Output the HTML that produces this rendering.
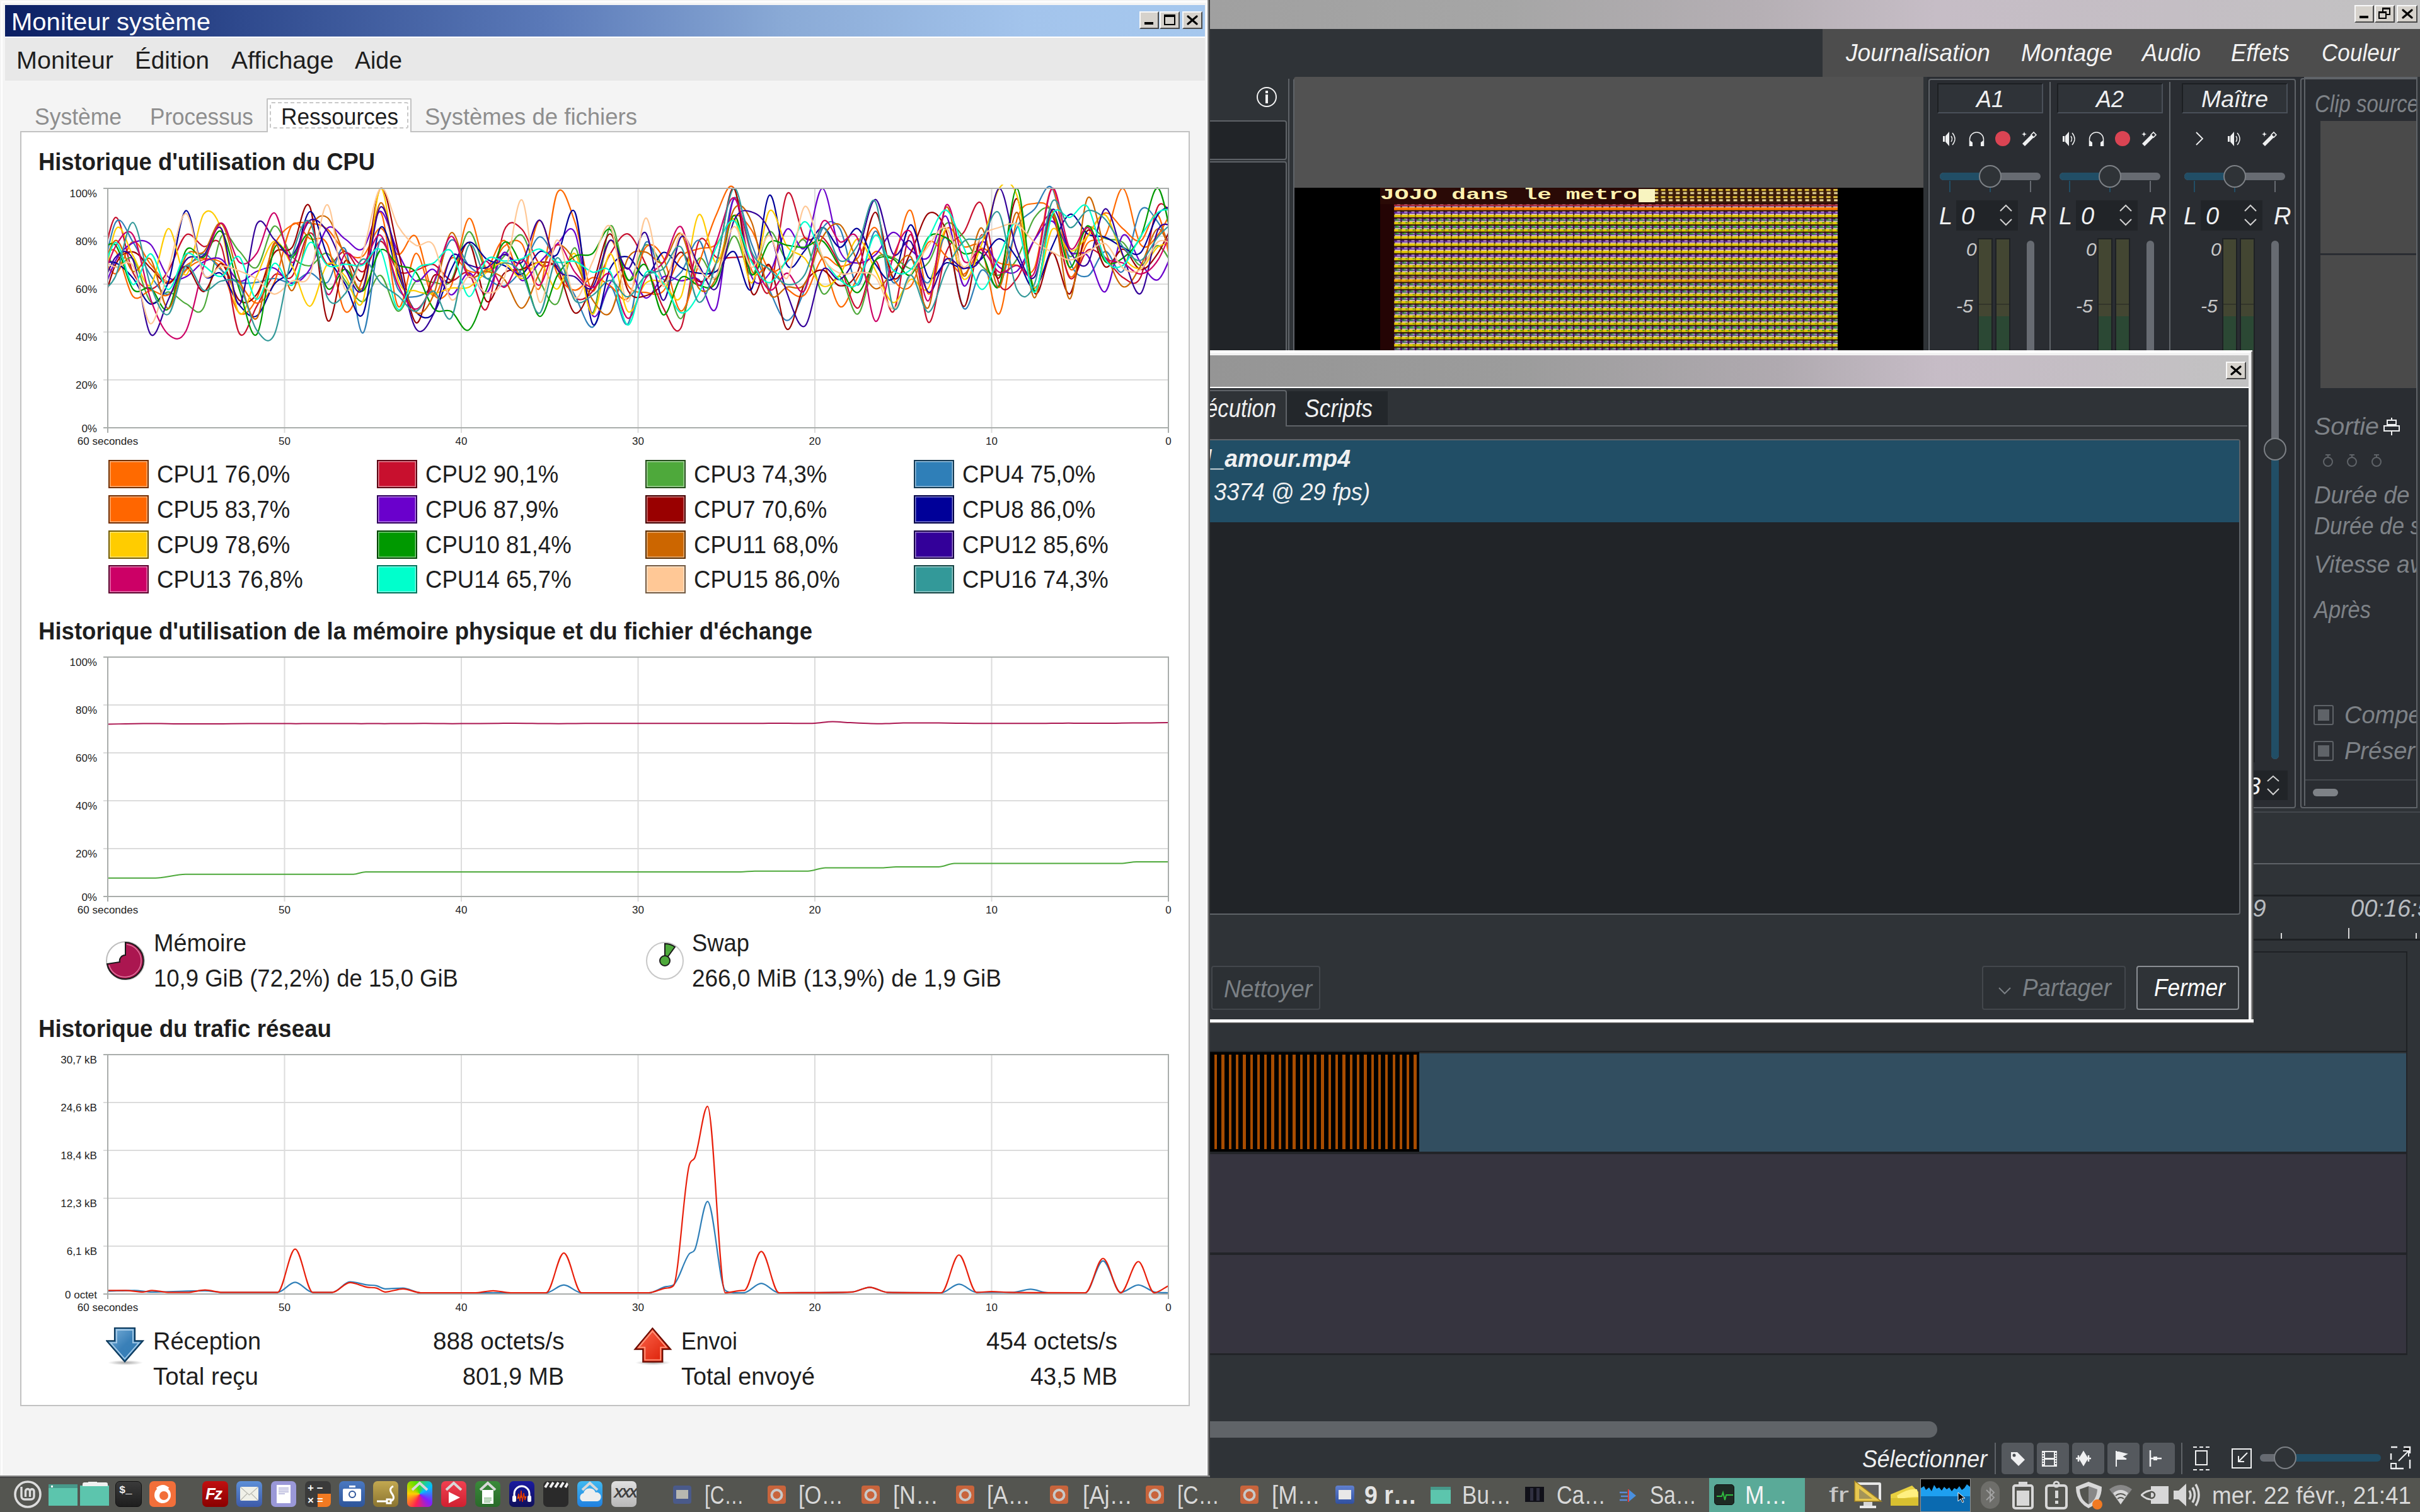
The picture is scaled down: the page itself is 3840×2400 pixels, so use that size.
<!DOCTYPE html><html><head><meta charset="utf-8"><style>
html,body{margin:0;padding:0;width:3840px;height:2400px;overflow:hidden;background:#2f3337}
body{position:relative;font-family:'Liberation Sans', sans-serif}
</style></head><body><div style="position:absolute;left:1920px;top:0px;width:1920px;height:2346px;background:#2f3337;"></div><div style="position:absolute;left:1920px;top:0px;width:1920px;height:46px;background:linear-gradient(90deg,#a0a0a0 0%,#a6a6a6 25%,#b5afb4 45%,#c6bdc6 60%,#c4bec4 80%,#c2c2c2 100%);"></div><div style="position:absolute;left:3736px;top:8px;width:31px;height:28px;background:#d6d2cc;border-top:2px solid #f8f8f8;border-left:2px solid #f8f8f8;border-right:2px solid #4a4a4a;border-bottom:2px solid #4a4a4a;box-sizing:border-box"></div><div style="position:absolute;left:3743.5px;top:25px;width:14px;height:4px;background:#000;"></div><div style="position:absolute;left:3768px;top:8px;width:32px;height:28px;background:#d6d2cc;border-top:2px solid #f8f8f8;border-left:2px solid #f8f8f8;border-right:2px solid #4a4a4a;border-bottom:2px solid #4a4a4a;box-sizing:border-box"></div><div style="position:absolute;left:3780.0px;top:12.0px;width:13px;height:12px;border:2px solid #000;border-top-width:3px;box-sizing:border-box"></div><div style="position:absolute;left:3774.0px;top:18.0px;width:13px;height:12px;border:2px solid #000;border-top-width:3px;box-sizing:border-box;background:#d6d2cc"></div><div style="position:absolute;left:3803px;top:8px;width:33px;height:28px;background:#d6d2cc;border-top:2px solid #f8f8f8;border-left:2px solid #f8f8f8;border-right:2px solid #4a4a4a;border-bottom:2px solid #4a4a4a;box-sizing:border-box"></div><svg style="position:absolute;left:3810.5px;top:14.0px" width="18" height="16"><path d="M2,2L16,14M16,2L2,14" stroke="#000" stroke-width="3.2" stroke-linecap="round"/></svg><div style="position:absolute;left:2892px;top:46px;width:948px;height:76px;background:#4d4d4d;"></div><div style="position:absolute;left:2929.0px;top:64.8px;font-size:38px;line-height:38px;font-weight:400;font-style:italic;color:#f2f2f2;white-space:pre;transform:scaleX(0.9766);transform-origin:0 0;">Journalisation</div><div style="position:absolute;left:3207.0px;top:64.8px;font-size:38px;line-height:38px;font-weight:400;font-style:italic;color:#f2f2f2;white-space:pre;transform:scaleX(0.9805);transform-origin:0 0;">Montage</div><div style="position:absolute;left:3399.0px;top:64.8px;font-size:38px;line-height:38px;font-weight:400;font-style:italic;color:#f2f2f2;white-space:pre;transform:scaleX(0.9568);transform-origin:0 0;">Audio</div><div style="position:absolute;left:3540.0px;top:64.8px;font-size:38px;line-height:38px;font-weight:400;font-style:italic;color:#f2f2f2;white-space:pre;transform:scaleX(0.9572);transform-origin:0 0;">Effets</div><div style="position:absolute;left:3684.0px;top:64.8px;font-size:38px;line-height:38px;font-weight:400;font-style:italic;color:#f2f2f2;white-space:pre;transform:scaleX(0.9243);transform-origin:0 0;">Couleur</div><div style="position:absolute;left:1994px;top:138px;width:32px;height:32px;border:2.5px solid #f4f4f4;border-radius:50%;box-sizing:border-box"></div><div style="position:absolute;left:2008px;top:144px;width:4px;height:4px;background:#f4f4f4;"></div><div style="position:absolute;left:2008px;top:150px;width:4px;height:14px;background:#f4f4f4;"></div><div style="position:absolute;left:1900px;top:191px;width:142px;height:63px;background:#212428;border:2px solid #5f6368;border-radius:4px;box-sizing:border-box"></div><div style="position:absolute;left:1900px;top:256px;width:142px;height:320px;background:#212428;border:2px solid #5f6368;border-radius:4px;box-sizing:border-box"></div><div style="position:absolute;left:2044px;top:125px;width:2px;height:431px;background:#5f6368;"></div><div style="position:absolute;left:2053px;top:122px;width:999px;height:176px;background:#525252;border-top-left-radius:4px"></div><div style="position:absolute;left:2052px;top:126px;width:2px;height:430px;background:#5f6368;"></div><div style="position:absolute;left:2054px;top:298px;width:998px;height:258px;background:#000000;"></div><svg style="position:absolute;left:2190px;top:298px" width="726" height="258">
<defs>
<pattern id="nz" x="0" y="3" width="11.4" height="11.4" patternUnits="userSpaceOnUse">
<rect width="11.4" height="11.4" fill="#3a1a14"/>
<rect x="0" y="5.5" width="11.4" height="4" fill="#e2c808"/>
<rect x="0.5" y="4" width="9" height="1.6" fill="#f2d4ee"/>
<rect x="0" y="1.2" width="11.4" height="2.2" fill="#6028b8"/>
<rect x="4" y="0.6" width="5" height="1.6" fill="#e0b8f0"/>
<rect x="9.6" y="0" width="1.4" height="11.4" fill="#200808" opacity=".5"/>
</pattern>
<pattern id="nzg" x="0" y="3" width="11.4" height="11.4" patternUnits="userSpaceOnUse">
<rect x="1" y="0.5" width="6" height="3" fill="#28c010"/>
<rect x="6" y="6" width="3" height="2" fill="#108a10"/>
</pattern>
<pattern id="nzo" x="0" y="3" width="11.4" height="11.4" patternUnits="userSpaceOnUse">
<rect x="0" y="5.5" width="11.4" height="4" fill="#ff7000"/>
<rect x="0" y="1" width="11.4" height="2" fill="#c02010"/>
</pattern>
<pattern id="dots" x="0" y="0" width="11.4" height="11.4" patternUnits="userSpaceOnUse">
<rect width="11.4" height="11.4" fill="#3a1a08"/>
<rect x="1" y="2" width="7" height="3" fill="#e8c840"/>
<rect x="2" y="7" width="6" height="3" fill="#f0e0a0"/>
</pattern>
</defs>
<rect width="726" height="258" fill="#2a0806"/>
<rect x="0" y="0" width="726" height="26" fill="#2a0a06"/>
<rect x="22" y="26" width="704" height="232" fill="url(#nz)"/>
<rect x="22" y="50" width="704" height="24" fill="url(#nzg)" opacity=".8"/><rect x="22" y="110" width="704" height="120" fill="url(#nzg)" opacity=".6"/>
<rect x="22" y="220" width="704" height="38" fill="url(#nzg)" opacity=".5"/>
<rect x="22" y="26" width="704" height="12" fill="url(#nzo)" opacity=".9"/>
<rect x="22" y="140" width="704" height="12" fill="url(#nzo)" opacity=".4"/>
<rect x="436" y="2" width="290" height="22" fill="url(#dots)"/>
<rect x="0" y="26" width="22" height="232" fill="#240404"/>
<rect x="410" y="2" width="26" height="21" fill="#f8f4c0"/>
</svg><div style="position:absolute;left:2190.0px;top:297.7px;font-size:24px;line-height:24px;font-weight:700;font-style:normal;color:#fff2b0;white-space:pre;transform:scaleX(1.5738);transform-origin:0 0;font-family:'Liberation Mono',monospace;">JOJO dans le metro</div><div style="position:absolute;left:3052px;top:122px;width:598px;height:1161px;background:#2a2d32;"></div><div style="position:absolute;left:3060px;top:125px;width:583px;height:1158px;border:2px solid #5f6368;border-bottom:2px solid #5f6368;border-radius:4px;box-sizing:border-box"></div><div style="position:absolute;left:3052px;top:122px;width:6px;height:1161px;background:#2f3337;"></div><div style="position:absolute;left:3074px;top:132px;width:168px;height:48px;background:#2f3338;border-top:2px solid #1c1f22;border-left:2px solid #1c1f22;border-right:2px solid #4a5059;border-bottom:2px solid #4a5059;box-sizing:border-box"></div><div style="position:absolute;left:3136.0px;top:138.7px;font-size:37px;line-height:37px;font-weight:400;font-style:italic;color:#eff0f1;white-space:pre;transform:scaleX(0.9720);transform-origin:0 0;">A1</div><div style="position:absolute;left:3078px;top:274px;width:160px;height:12px;background:#676b72;border-radius:6px"></div><div style="position:absolute;left:3078px;top:274px;width:80px;height:12px;background:#214e66;border-radius:6px 0 0 6px"></div><div style="position:absolute;left:3140px;top:262px;width:36px;height:36px;background:#2f3337;border:2px solid #7d8186;border-radius:50%;box-sizing:border-box"></div><div style="position:absolute;left:3093px;top:287px;width:2px;height:18px;background:#214e66;"></div><div style="position:absolute;left:3157px;top:298px;width:2px;height:7px;background:#214e66;"></div><div style="position:absolute;left:3221px;top:287px;width:2px;height:18px;background:#676b72;"></div><div style="position:absolute;left:3104px;top:318px;width:98px;height:48px;background:#212428;"></div><div style="position:absolute;left:3077.0px;top:323.8px;font-size:38px;line-height:38px;font-weight:400;font-style:italic;color:#eff0f1;white-space:pre;">L</div><div style="position:absolute;left:3112.0px;top:323.8px;font-size:38px;line-height:38px;font-weight:400;font-style:italic;color:#eff0f1;white-space:pre;">0</div><div style="position:absolute;left:3220.0px;top:323.8px;font-size:38px;line-height:38px;font-weight:400;font-style:italic;color:#eff0f1;white-space:pre;">R</div><svg style="position:absolute;left:3172px;top:324px" width="22" height="36"><path d="M2,11 L11,2 L20,11 M2,24 L11,33 L20,24" fill="none" stroke="#d0d0d0" stroke-width="2"/></svg><div style="position:absolute;left:3137.8px;top:378px;width:24px;height:832px;background:#1e2124;"></div><div style="position:absolute;left:3139.8px;top:380px;width:20px;height:122px;background:#434632;"></div><div style="position:absolute;left:3139.8px;top:502px;width:20px;height:706px;background:#2b4834;"></div><div style="position:absolute;left:3139.8px;top:482px;width:20px;height:2px;background:#33352a;"></div><div style="position:absolute;left:3165.8px;top:378px;width:24px;height:832px;background:#1e2124;"></div><div style="position:absolute;left:3167.8px;top:380px;width:20px;height:122px;background:#434632;"></div><div style="position:absolute;left:3167.8px;top:502px;width:20px;height:706px;background:#2b4834;"></div><div style="position:absolute;left:3167.8px;top:482px;width:20px;height:2px;background:#33352a;"></div><div style="position:absolute;left:3120.0px;top:380.6px;font-size:30px;line-height:30px;font-weight:400;font-style:italic;color:#c8c8c8;white-space:pre;">0</div><div style="position:absolute;left:3104.0px;top:470.6px;font-size:30px;line-height:30px;font-weight:400;font-style:italic;color:#c8c8c8;white-space:pre;">-5</div><div style="position:absolute;left:3215.7px;top:382px;width:12px;height:820px;background:#676b72;border-radius:6px"></div><div style="position:absolute;left:3252px;top:130px;width:2px;height:1150px;background:#5f6368;"></div><div style="position:absolute;left:3264px;top:132px;width:168px;height:48px;background:#2f3338;border-top:2px solid #1c1f22;border-left:2px solid #1c1f22;border-right:2px solid #4a5059;border-bottom:2px solid #4a5059;box-sizing:border-box"></div><div style="position:absolute;left:3326.0px;top:138.7px;font-size:37px;line-height:37px;font-weight:400;font-style:italic;color:#eff0f1;white-space:pre;transform:scaleX(0.9720);transform-origin:0 0;">A2</div><div style="position:absolute;left:3268px;top:274px;width:160px;height:12px;background:#676b72;border-radius:6px"></div><div style="position:absolute;left:3268px;top:274px;width:80px;height:12px;background:#214e66;border-radius:6px 0 0 6px"></div><div style="position:absolute;left:3330px;top:262px;width:36px;height:36px;background:#2f3337;border:2px solid #7d8186;border-radius:50%;box-sizing:border-box"></div><div style="position:absolute;left:3283px;top:287px;width:2px;height:18px;background:#214e66;"></div><div style="position:absolute;left:3347px;top:298px;width:2px;height:7px;background:#214e66;"></div><div style="position:absolute;left:3411px;top:287px;width:2px;height:18px;background:#676b72;"></div><div style="position:absolute;left:3294px;top:318px;width:98px;height:48px;background:#212428;"></div><div style="position:absolute;left:3267.0px;top:323.8px;font-size:38px;line-height:38px;font-weight:400;font-style:italic;color:#eff0f1;white-space:pre;">L</div><div style="position:absolute;left:3302.0px;top:323.8px;font-size:38px;line-height:38px;font-weight:400;font-style:italic;color:#eff0f1;white-space:pre;">0</div><div style="position:absolute;left:3410.0px;top:323.8px;font-size:38px;line-height:38px;font-weight:400;font-style:italic;color:#eff0f1;white-space:pre;">R</div><svg style="position:absolute;left:3362px;top:324px" width="22" height="36"><path d="M2,11 L11,2 L20,11 M2,24 L11,33 L20,24" fill="none" stroke="#d0d0d0" stroke-width="2"/></svg><div style="position:absolute;left:3327.8px;top:378px;width:24px;height:832px;background:#1e2124;"></div><div style="position:absolute;left:3329.8px;top:380px;width:20px;height:122px;background:#434632;"></div><div style="position:absolute;left:3329.8px;top:502px;width:20px;height:706px;background:#2b4834;"></div><div style="position:absolute;left:3329.8px;top:482px;width:20px;height:2px;background:#33352a;"></div><div style="position:absolute;left:3355.8px;top:378px;width:24px;height:832px;background:#1e2124;"></div><div style="position:absolute;left:3357.8px;top:380px;width:20px;height:122px;background:#434632;"></div><div style="position:absolute;left:3357.8px;top:502px;width:20px;height:706px;background:#2b4834;"></div><div style="position:absolute;left:3357.8px;top:482px;width:20px;height:2px;background:#33352a;"></div><div style="position:absolute;left:3310.0px;top:380.6px;font-size:30px;line-height:30px;font-weight:400;font-style:italic;color:#c8c8c8;white-space:pre;">0</div><div style="position:absolute;left:3294.0px;top:470.6px;font-size:30px;line-height:30px;font-weight:400;font-style:italic;color:#c8c8c8;white-space:pre;">-5</div><div style="position:absolute;left:3406px;top:382px;width:12px;height:820px;background:#676b72;border-radius:6px"></div><div style="position:absolute;left:3442px;top:130px;width:2px;height:1150px;background:#5f6368;"></div><div style="position:absolute;left:3462px;top:132px;width:168px;height:48px;background:#2f3338;border-top:2px solid #1c1f22;border-left:2px solid #1c1f22;border-right:2px solid #4a5059;border-bottom:2px solid #4a5059;box-sizing:border-box"></div><div style="position:absolute;left:3493.0px;top:138.7px;font-size:37px;line-height:37px;font-weight:400;font-style:italic;color:#eff0f1;white-space:pre;transform:scaleX(1.0109);transform-origin:0 0;">Maître</div><div style="position:absolute;left:3466px;top:274px;width:160px;height:12px;background:#676b72;border-radius:6px"></div><div style="position:absolute;left:3466px;top:274px;width:80px;height:12px;background:#214e66;border-radius:6px 0 0 6px"></div><div style="position:absolute;left:3528px;top:262px;width:36px;height:36px;background:#2f3337;border:2px solid #7d8186;border-radius:50%;box-sizing:border-box"></div><div style="position:absolute;left:3481px;top:287px;width:2px;height:18px;background:#214e66;"></div><div style="position:absolute;left:3545px;top:298px;width:2px;height:7px;background:#214e66;"></div><div style="position:absolute;left:3609px;top:287px;width:2px;height:18px;background:#676b72;"></div><div style="position:absolute;left:3492px;top:318px;width:98px;height:48px;background:#212428;"></div><div style="position:absolute;left:3465.0px;top:323.8px;font-size:38px;line-height:38px;font-weight:400;font-style:italic;color:#eff0f1;white-space:pre;">L</div><div style="position:absolute;left:3500.0px;top:323.8px;font-size:38px;line-height:38px;font-weight:400;font-style:italic;color:#eff0f1;white-space:pre;">0</div><div style="position:absolute;left:3608.0px;top:323.8px;font-size:38px;line-height:38px;font-weight:400;font-style:italic;color:#eff0f1;white-space:pre;">R</div><svg style="position:absolute;left:3560px;top:324px" width="22" height="36"><path d="M2,11 L11,2 L20,11 M2,24 L11,33 L20,24" fill="none" stroke="#d0d0d0" stroke-width="2"/></svg><div style="position:absolute;left:3526px;top:378px;width:24px;height:832px;background:#1e2124;"></div><div style="position:absolute;left:3528px;top:380px;width:20px;height:122px;background:#434632;"></div><div style="position:absolute;left:3528px;top:502px;width:20px;height:706px;background:#2b4834;"></div><div style="position:absolute;left:3528px;top:482px;width:20px;height:2px;background:#33352a;"></div><div style="position:absolute;left:3554px;top:378px;width:24px;height:832px;background:#1e2124;"></div><div style="position:absolute;left:3556px;top:380px;width:20px;height:122px;background:#434632;"></div><div style="position:absolute;left:3556px;top:502px;width:20px;height:706px;background:#2b4834;"></div><div style="position:absolute;left:3556px;top:482px;width:20px;height:2px;background:#33352a;"></div><div style="position:absolute;left:3508.0px;top:380.6px;font-size:30px;line-height:30px;font-weight:400;font-style:italic;color:#c8c8c8;white-space:pre;">0</div><div style="position:absolute;left:3492.0px;top:470.6px;font-size:30px;line-height:30px;font-weight:400;font-style:italic;color:#c8c8c8;white-space:pre;">-5</div><div style="position:absolute;left:3604px;top:382px;width:12px;height:823px;background:#676b72;border-radius:6px"></div><div style="position:absolute;left:3604px;top:713px;width:12px;height:492px;background:#214e66;border-radius:6px"></div><div style="position:absolute;left:3592px;top:695px;width:36px;height:36px;background:#2f3337;border:2px solid #7d8186;border-radius:50%;box-sizing:border-box"></div><svg style="position:absolute;left:3082px;top:208px" width="26" height="25"><path d="M1,8 H4 V17 H1 Z M5,8 L11,1 V24 L5,17 Z" fill="#eff0f1"/><path d="M14,8 Q17,12.5 14,17 M16,3 Q24,12.5 16,22" fill="none" stroke="#eff0f1" stroke-width="1.5"/></svg><svg style="position:absolute;left:3124px;top:208px" width="25" height="25"><path d="M1.5,24 V13 A11,11 0 0 1 23.5,13 V24" fill="none" stroke="#eff0f1" stroke-width="1.5"/><path d="M2,15 L6,18 V24 H2 Z M23,15 L19,18 V24 H23 Z" fill="#eff0f1"/></svg><div style="position:absolute;left:3166px;top:208px;width:24px;height:24px;border-radius:50%;background:#da4453"></div><svg style="position:absolute;left:3208px;top:208px" width="25" height="25"><path d="M1,20 L15,6 L19,10 L5,24 Z" fill="#eff0f1"/><path d="M15,6 L19,2 L23,6 L19,10 Z" fill="none" stroke="#eff0f1" stroke-width="1.6"/><path d="M4,1 L5,4 L8,5 L5,6 L4,9 L3,6 L0,5 L3,4 Z" fill="#eff0f1"/></svg><svg style="position:absolute;left:3272px;top:208px" width="26" height="25"><path d="M1,8 H4 V17 H1 Z M5,8 L11,1 V24 L5,17 Z" fill="#eff0f1"/><path d="M14,8 Q17,12.5 14,17 M16,3 Q24,12.5 16,22" fill="none" stroke="#eff0f1" stroke-width="1.5"/></svg><svg style="position:absolute;left:3314px;top:208px" width="25" height="25"><path d="M1.5,24 V13 A11,11 0 0 1 23.5,13 V24" fill="none" stroke="#eff0f1" stroke-width="1.5"/><path d="M2,15 L6,18 V24 H2 Z M23,15 L19,18 V24 H23 Z" fill="#eff0f1"/></svg><div style="position:absolute;left:3356px;top:208px;width:24px;height:24px;border-radius:50%;background:#da4453"></div><svg style="position:absolute;left:3398px;top:208px" width="25" height="25"><path d="M1,20 L15,6 L19,10 L5,24 Z" fill="#eff0f1"/><path d="M15,6 L19,2 L23,6 L19,10 Z" fill="none" stroke="#eff0f1" stroke-width="1.6"/><path d="M4,1 L5,4 L8,5 L5,6 L4,9 L3,6 L0,5 L3,4 Z" fill="#eff0f1"/></svg><svg style="position:absolute;left:3482px;top:208px" width="16" height="24"><path d="M3,2 L13,12 L3,22" fill="none" stroke="#eff0f1" stroke-width="1.8"/></svg><svg style="position:absolute;left:3534px;top:208px" width="26" height="25"><path d="M1,8 H4 V17 H1 Z M5,8 L11,1 V24 L5,17 Z" fill="#eff0f1"/><path d="M14,8 Q17,12.5 14,17 M16,3 Q24,12.5 16,22" fill="none" stroke="#eff0f1" stroke-width="1.5"/></svg><svg style="position:absolute;left:3589px;top:208px" width="25" height="25"><path d="M1,20 L15,6 L19,10 L5,24 Z" fill="#eff0f1"/><path d="M15,6 L19,2 L23,6 L19,10 Z" fill="none" stroke="#eff0f1" stroke-width="1.6"/><path d="M4,1 L5,4 L8,5 L5,6 L4,9 L3,6 L0,5 L3,4 Z" fill="#eff0f1"/></svg><div style="position:absolute;left:3576px;top:1223px;width:54px;height:47px;background:#212428;"></div><div style="position:absolute;left:3566.0px;top:1228.8px;font-size:38px;line-height:38px;font-weight:400;font-style:italic;color:#eff0f1;white-space:pre;">3</div><svg style="position:absolute;left:3596px;top:1230px" width="22" height="34"><path d="M2,10 L11,2 L20,10 M2,22 L11,31 L20,22" fill="none" stroke="#d0d0d0" stroke-width="2"/></svg><div style="position:absolute;left:3650px;top:122px;width:190px;height:1161px;background:#2a2d32;"></div><div style="position:absolute;left:3650px;top:124px;width:188px;height:1159px;border:2px solid #5f6368;border-radius:4px;box-sizing:border-box"></div><div style="position:absolute;left:3656px;top:122px;width:180px;height:3px;background:#5f6368;"></div><div style="position:absolute;left:3656px;top:125px;width:2px;height:1154px;background:#5f6368;"></div><div style="position:absolute;left:3673.0px;top:145.8px;font-size:38px;line-height:38px;font-weight:400;font-style:italic;color:#7e8287;white-space:pre;transform:scaleX(0.8681);transform-origin:0 0;">Clip source</div><div style="position:absolute;left:3682px;top:192px;width:154px;height:210px;background:#4a4a4a;"></div><div style="position:absolute;left:3682px;top:405px;width:154px;height:211px;background:#4a4a4a;"></div><div style="position:absolute;left:3672.0px;top:657.8px;font-size:38px;line-height:38px;font-weight:400;font-style:italic;color:#7e8287;white-space:pre;transform:scaleX(1.0375);transform-origin:0 0;">Sortie</div><svg style="position:absolute;left:3782px;top:662px" width="26" height="30"><path d="M13,1 V5 M6,5 H20 V12 H6 Z M1,14 H25 V22 H1 Z M13,22 V29" fill="none" stroke="#eff0f1" stroke-width="2"/></svg><svg style="position:absolute;left:3681px;top:718px" width="26" height="26"><circle cx="13" cy="15" r="7" fill="none" stroke="#5f6368" stroke-width="2"/><path d="M9,4 H17 M13,4 V8" stroke="#5f6368" stroke-width="2"/></svg><svg style="position:absolute;left:3719px;top:718px" width="26" height="26"><circle cx="13" cy="15" r="7" fill="none" stroke="#5f6368" stroke-width="2"/><path d="M9,4 H17 M13,4 V8" stroke="#5f6368" stroke-width="2"/></svg><svg style="position:absolute;left:3758px;top:718px" width="26" height="26"><circle cx="13" cy="15" r="7" fill="none" stroke="#5f6368" stroke-width="2"/><path d="M9,4 H17 M13,4 V8" stroke="#5f6368" stroke-width="2"/></svg><div style="position:absolute;left:3672.0px;top:766.8px;font-size:38px;line-height:38px;font-weight:400;font-style:italic;color:#7e8287;white-space:pre;transform:scaleX(0.9696);transform-origin:0 0;">Durée de l</div><div style="position:absolute;left:3672.0px;top:815.8px;font-size:38px;line-height:38px;font-weight:400;font-style:italic;color:#7e8287;white-space:pre;transform:scaleX(0.9145);transform-origin:0 0;">Durée de s</div><div style="position:absolute;left:3672.0px;top:876.8px;font-size:38px;line-height:38px;font-weight:400;font-style:italic;color:#7e8287;white-space:pre;transform:scaleX(0.9735);transform-origin:0 0;">Vitesse av</div><div style="position:absolute;left:3672.0px;top:948.8px;font-size:38px;line-height:38px;font-weight:400;font-style:italic;color:#7e8287;white-space:pre;transform:scaleX(0.9065);transform-origin:0 0;">Après</div><div style="position:absolute;left:3671px;top:1119px;width:32px;height:32px;border:2px solid #5f6368;border-radius:3px;box-sizing:border-box"></div><div style="position:absolute;left:3678px;top:1126px;width:18px;height:18px;background:#5f6368;"></div><div style="position:absolute;left:3720.0px;top:1115.8px;font-size:38px;line-height:38px;font-weight:400;font-style:italic;color:#7e8287;white-space:pre;">Compe</div><div style="position:absolute;left:3671px;top:1176px;width:32px;height:32px;border:2px solid #5f6368;border-radius:3px;box-sizing:border-box"></div><div style="position:absolute;left:3678px;top:1183px;width:18px;height:18px;background:#5f6368;"></div><div style="position:absolute;left:3720.0px;top:1172.8px;font-size:38px;line-height:38px;font-weight:400;font-style:italic;color:#7e8287;white-space:pre;">Préserv</div><div style="position:absolute;left:3658px;top:1237px;width:178px;height:2px;background:#43474c;"></div><div style="position:absolute;left:3670px;top:1252px;width:40px;height:12px;background:#7e8287;border-radius:6px"></div><div style="position:absolute;left:3836px;top:122px;width:4px;height:1161px;background:#2f3337;"></div><div style="position:absolute;left:3834px;top:126px;width:2px;height:1155px;background:#5f6368;"></div><div style="position:absolute;left:3576px;top:1288px;width:264px;height:2px;background:#43474c;"></div><div style="position:absolute;left:3576px;top:1370px;width:264px;height:2px;background:#5f6368;"></div><div style="position:absolute;left:3576px;top:1420px;width:264px;height:3px;background:#1e2124;"></div><div style="position:absolute;left:3566.0px;top:1422.8px;font-size:38px;line-height:38px;font-weight:400;font-style:italic;color:#b8bcc0;white-space:pre;">’9</div><div style="position:absolute;left:3730.0px;top:1422.8px;font-size:38px;line-height:38px;font-weight:400;font-style:italic;color:#b8bcc0;white-space:pre;">00:16:5</div><div style="position:absolute;left:3619px;top:1481px;width:2px;height:10px;background:#d8d8d8;"></div><div style="position:absolute;left:3726px;top:1473px;width:2px;height:18px;background:#d8d8d8;"></div><div style="position:absolute;left:3833px;top:1481px;width:2px;height:10px;background:#d8d8d8;"></div><div style="position:absolute;left:3576px;top:1490px;width:264px;height:3px;background:#1e2124;"></div><div style="position:absolute;left:3576px;top:1510px;width:244px;height:2px;background:#1e2124;"></div><div style="position:absolute;left:3818px;top:1510px;width:2px;height:160px;background:#1e2124;"></div><div style="position:absolute;left:1920px;top:1668px;width:1900px;height:2px;background:#1e2124;"></div><div style="position:absolute;left:1920px;top:1670px;width:332px;height:158px;background:repeating-linear-gradient(90deg,#000 0px,#000 7px,#a84c00 7px,#a84c00 11.3px)"></div><div style="position:absolute;left:1920px;top:1670px;width:332px;height:4px;background:#000;"></div><div style="position:absolute;left:1920px;top:1824px;width:332px;height:4px;background:#000;"></div><div style="position:absolute;left:2252px;top:1672px;width:1566px;height:156px;background:#324e60;"></div><div style="position:absolute;left:1920px;top:1828px;width:1900px;height:4px;background:#222428;"></div><div style="position:absolute;left:1920px;top:1832px;width:1898px;height:156px;background:#36343f;"></div><div style="position:absolute;left:1920px;top:1988px;width:1900px;height:4px;background:#222428;"></div><div style="position:absolute;left:1920px;top:1992px;width:1898px;height:156px;background:#36343f;"></div><div style="position:absolute;left:1920px;top:2148px;width:1900px;height:3px;background:#222428;"></div><div style="position:absolute;left:3818px;top:1670px;width:2px;height:480px;background:#222428;"></div><div style="position:absolute;left:1900px;top:2256px;width:1174px;height:26px;background:#606468;border-radius:13px"></div><div style="position:absolute;left:2955.0px;top:2296.8px;font-size:38px;line-height:38px;font-weight:400;font-style:italic;color:#eff0f1;white-space:pre;transform:scaleX(0.9373);transform-origin:0 0;">Sélectionner</div><div style="position:absolute;left:3165px;top:2290px;width:2px;height:50px;background:#5f6368;"></div><div style="position:absolute;left:3461px;top:2290px;width:2px;height:50px;background:#5f6368;"></div><div style="position:absolute;left:3176px;top:2290px;width:51px;height:50px;background:#55595e;border-radius:5px"></div><div style="position:absolute;left:3232px;top:2290px;width:51px;height:50px;background:#55595e;border-radius:5px"></div><div style="position:absolute;left:3288px;top:2290px;width:51px;height:50px;background:#55595e;border-radius:5px"></div><div style="position:absolute;left:3344px;top:2290px;width:51px;height:50px;background:#55595e;border-radius:5px"></div><div style="position:absolute;left:3400px;top:2290px;width:51px;height:50px;background:#55595e;border-radius:5px"></div><svg style="position:absolute;left:3176px;top:2290px" width="280" height="50"><path d="M15,15 H25 L37,27 L27,37 L15,25 Z" fill="#eff0f1"/><circle cx="20" cy="20" r="2.5" fill="#4a4e53"/><rect x="64" y="13" width="24" height="25" fill="#eff0f1"/><rect x="69" y="15" width="14" height="9" fill="#55595e"/><rect x="69" y="27" width="14" height="9" fill="#55595e"/><path d="M66,16 V35 M86,16 V35" stroke="#55595e" stroke-width="2" stroke-dasharray="2,2"/><path d="M124,25 L130,15 L136,25 L130,35 Z M118,25 H142 M122,20 V30 M138,20 V30" fill="#eff0f1" stroke="#eff0f1" stroke-width="2.5"/><path d="M182,13 V38 M182,14 L198,18 L190,22 L198,26 L182,26" fill="#eff0f1" stroke="#eff0f1" stroke-width="2"/><path d="M236,12 V38 M240,25 H254 M236,25 H240" stroke="#eff0f1" stroke-width="2.5"/><rect x="241" y="22" width="6" height="6" fill="#eff0f1"/></svg><svg style="position:absolute;left:3478px;top:2295px" width="360" height="40"><path d="M2,2 H8 M12,2 H18 M22,2 H28 M2,38 H8 M12,38 H18 M22,38 H28" stroke="#eff0f1" stroke-width="2"/><rect x="6" y="8" width="18" height="22" fill="none" stroke="#eff0f1" stroke-width="2"/><rect x="64" y="5" width="30" height="30" fill="none" stroke="#eff0f1" stroke-width="2"/><path d="M88,11 L74,25 M74,16 V25 H83" fill="none" stroke="#eff0f1" stroke-width="2"/><path d="M316,2 H326 M336,2 H346 V12 M346,22 V36 M316,12 V22 M316,36 H336" stroke="#eff0f1" stroke-width="2.4"/><rect x="316" y="28" width="8" height="8" fill="none" stroke="#eff0f1" stroke-width="2"/><path d="M328,24 L344,8 M335,8 H344 V17" fill="none" stroke="#eff0f1" stroke-width="2"/></svg><div style="position:absolute;left:3586px;top:2308px;width:192px;height:12px;background:#214e66;border-radius:6px"></div><div style="position:absolute;left:3586px;top:2308px;width:40px;height:12px;background:#676b72;border-radius:6px 0 0 6px"></div><div style="position:absolute;left:3608px;top:2296px;width:36px;height:36px;background:#2f3337;border:2px solid #7d8186;border-radius:50%;box-sizing:border-box"></div><div style="position:absolute;left:1920px;top:556px;width:1656px;height:1069px;background:#ffffff;"></div><div style="position:absolute;left:1920px;top:560px;width:1652px;height:4px;background:#f2f2f2;"></div><div style="position:absolute;left:1920px;top:564px;width:1648px;height:50px;background:linear-gradient(90deg,#959595 0%,#9c9c9c 30%,#b0aab0 55%,#c6bcc6 70%,#c4bec4 85%,#c2c2c2 100%);"></div><div style="position:absolute;left:3568px;top:560px;width:4px;height:1060px;background:#f2f2f2;"></div><div style="position:absolute;left:3572px;top:558px;width:2px;height:1066px;background:#8a8a8a;"></div><div style="position:absolute;left:3574px;top:556px;width:2px;height:1070px;background:#444444;"></div><div style="position:absolute;left:3532px;top:574px;width:32px;height:28px;background:#d6d2cc;border-top:2px solid #f8f8f8;border-left:2px solid #f8f8f8;border-right:2px solid #4a4a4a;border-bottom:2px solid #4a4a4a;box-sizing:border-box"></div><svg style="position:absolute;left:3539.0px;top:580.0px" width="18" height="16"><path d="M2,2L16,14M16,2L2,14" stroke="#000" stroke-width="3.2" stroke-linecap="round"/></svg><div style="position:absolute;left:1920px;top:616px;width:1648px;height:1002px;background:#2f3337;"></div><div style="position:absolute;left:1920px;top:619px;width:121px;height:57px;background:#2f3337;"></div><div style="position:absolute;left:1900px;top:619px;width:142px;height:58px;border:2px solid #5f6368;border-bottom:none;border-radius:4px 4px 0 0;box-sizing:border-box"></div><div style="position:absolute;left:2042px;top:621px;width:160px;height:55px;background:#23272b;"></div><div style="position:absolute;left:2041px;top:675px;width:1525px;height:2px;background:#5f6368;"></div><div style="position:absolute;left:1913.0px;top:628.1px;font-size:40px;line-height:40px;font-weight:400;font-style:italic;color:#eff0f1;white-space:pre;transform:scaleX(0.8683);transform-origin:0 0;clip-path:inset(0 0 0 7px);">écution</div><div style="position:absolute;left:2070.0px;top:628.1px;font-size:40px;line-height:40px;font-weight:400;font-style:italic;color:#eff0f1;white-space:pre;transform:scaleX(0.8834);transform-origin:0 0;">Scripts</div><div style="position:absolute;left:1900px;top:697px;width:1655px;height:755px;background:#212428;border:2px solid #5f6368;border-radius:4px;box-sizing:border-box"></div><div style="position:absolute;left:1920px;top:699px;width:1633px;height:130px;background:#214e66;"></div><div style="position:absolute;left:1912.0px;top:708.8px;font-size:38px;line-height:38px;font-weight:700;font-style:italic;color:#eff0f1;white-space:pre;transform:scaleX(0.9854);transform-origin:0 0;clip-path:inset(0 0 0 8px);">l_amour.mp4</div><div style="position:absolute;left:1926.0px;top:761.8px;font-size:38px;line-height:38px;font-weight:400;font-style:italic;color:#eff0f1;white-space:pre;transform:scaleX(0.9524);transform-origin:0 0;">3374 @ 29 fps)</div><div style="position:absolute;left:1922px;top:1533px;width:173px;height:70px;border:2px solid #43474c;border-radius:4px;background:#2c3034;box-sizing:border-box"></div><div style="position:absolute;left:1942.0px;top:1550.8px;font-size:38px;line-height:38px;font-weight:400;font-style:italic;color:#7b8085;white-space:pre;transform:scaleX(0.9748);transform-origin:0 0;">Nettoyer</div><div style="position:absolute;left:3145px;top:1533px;width:228px;height:70px;border:2px solid #43474c;border-radius:4px;background:#2c3034;box-sizing:border-box"></div><svg style="position:absolute;left:3170px;top:1566px" width="22" height="14"><path d="M2,2 L11,11 L20,2" fill="none" stroke="#7b8085" stroke-width="2"/></svg><div style="position:absolute;left:3209.0px;top:1548.8px;font-size:38px;line-height:38px;font-weight:400;font-style:italic;color:#7b8085;white-space:pre;transform:scaleX(0.9674);transform-origin:0 0;">Partager</div><div style="position:absolute;left:3390px;top:1533px;width:163px;height:70px;border:2px solid #8a8e93;border-radius:4px;background:#2f3337;box-sizing:border-box"></div><div style="position:absolute;left:3418.0px;top:1548.8px;font-size:38px;line-height:38px;font-weight:400;font-style:italic;color:#ffffff;white-space:pre;transform:scaleX(0.9228);transform-origin:0 0;">Fermer</div><div style="position:absolute;left:1920px;top:1618px;width:1656px;height:5px;background:#ffffff;"></div><div style="position:absolute;left:1920px;top:1623px;width:1656px;height:2px;background:#444444;"></div><div style="position:absolute;left:0px;top:0px;width:1920px;height:2346px;background:#f4f4f4;"></div><div style="position:absolute;left:2px;top:2px;width:2px;height:2340px;background:#ffffff;"></div><div style="position:absolute;left:2px;top:2px;width:1914px;height:2px;background:#ffffff;"></div><div style="position:absolute;left:1914px;top:2px;width:2px;height:2340px;background:#ffffff;"></div><div style="position:absolute;left:1916px;top:0px;width:2px;height:2346px;background:#8a8a8a;"></div><div style="position:absolute;left:1918px;top:0px;width:2px;height:2346px;background:#444444;"></div><div style="position:absolute;left:0px;top:2342px;width:1920px;height:2px;background:#8a8a8a;"></div><div style="position:absolute;left:0px;top:2344px;width:1920px;height:2px;background:#444444;"></div><div style="position:absolute;left:8px;top:8px;width:1904px;height:50px;background:linear-gradient(90deg,#0b1f63 0%,#2f4a8e 20%,#5a79b8 45%,#8aaad6 65%,#a3c4ec 85%,#a6c8ee 100%);"></div><div style="position:absolute;left:8px;top:58px;width:1904px;height:2px;background:#ffffff;"></div><div style="position:absolute;left:18.0px;top:15.8px;font-size:38px;line-height:38px;font-weight:400;font-style:normal;color:#ffffff;white-space:pre;transform:scaleX(1.0537);transform-origin:0 0;">Moniteur système</div><div style="position:absolute;left:1808px;top:18px;width:31px;height:28px;background:#d6d2cc;border-top:2px solid #f8f8f8;border-left:2px solid #f8f8f8;border-right:2px solid #4a4a4a;border-bottom:2px solid #4a4a4a;box-sizing:border-box"></div><div style="position:absolute;left:1815.5px;top:35px;width:14px;height:4px;background:#000;"></div><div style="position:absolute;left:1840px;top:18px;width:32px;height:28px;background:#d6d2cc;border-top:2px solid #f8f8f8;border-left:2px solid #f8f8f8;border-right:2px solid #4a4a4a;border-bottom:2px solid #4a4a4a;box-sizing:border-box"></div><div style="position:absolute;left:1847.0px;top:23.0px;width:18px;height:17px;border:2px solid #000;border-top-width:4px;box-sizing:border-box"></div><div style="position:absolute;left:1876px;top:18px;width:32px;height:28px;background:#d6d2cc;border-top:2px solid #f8f8f8;border-left:2px solid #f8f8f8;border-right:2px solid #4a4a4a;border-bottom:2px solid #4a4a4a;box-sizing:border-box"></div><svg style="position:absolute;left:1883.0px;top:24.0px" width="18" height="16"><path d="M2,2L16,14M16,2L2,14" stroke="#000" stroke-width="3.2" stroke-linecap="round"/></svg><div style="position:absolute;left:8px;top:60px;width:1904px;height:68px;background:#e8e8e8;"></div><div style="position:absolute;left:25.5px;top:76.0px;font-size:39px;line-height:39px;font-weight:400;font-style:normal;color:#1e1e1e;white-space:pre;transform:scaleX(1.0149);transform-origin:0 0;">Moniteur</div><div style="position:absolute;left:214.0px;top:76.0px;font-size:39px;line-height:39px;font-weight:400;font-style:normal;color:#1e1e1e;white-space:pre;transform:scaleX(0.9895);transform-origin:0 0;">Édition</div><div style="position:absolute;left:367.0px;top:76.0px;font-size:39px;line-height:39px;font-weight:400;font-style:normal;color:#1e1e1e;white-space:pre;transform:scaleX(1.0043);transform-origin:0 0;">Affichage</div><div style="position:absolute;left:563.0px;top:76.0px;font-size:39px;line-height:39px;font-weight:400;font-style:normal;color:#1e1e1e;white-space:pre;transform:scaleX(0.9608);transform-origin:0 0;">Aide</div><div style="position:absolute;left:32px;top:208px;width:1856px;height:2024px;background:#ffffff;border:2px solid #c2c2c2;box-sizing:border-box"></div><div style="position:absolute;left:423px;top:156px;width:230px;height:54px;background:#ffffff;border:2px solid #c2c2c2;border-bottom:none;border-radius:2px 2px 0 0;box-sizing:border-box"></div><div style="position:absolute;left:425px;top:208px;width:226px;height:2px;background:#ffffff;"></div><div style="position:absolute;left:428px;top:162px;width:220px;height:42px;border:2px dashed #c8c8c8;border-radius:3px;box-sizing:border-box"></div><div style="position:absolute;left:55.0px;top:166.7px;font-size:37px;line-height:37px;font-weight:400;font-style:normal;color:#8e8e8e;white-space:pre;transform:scaleX(0.9587);transform-origin:0 0;">Système</div><div style="position:absolute;left:238.0px;top:166.7px;font-size:37px;line-height:37px;font-weight:400;font-style:normal;color:#8e8e8e;white-space:pre;transform:scaleX(0.9477);transform-origin:0 0;">Processus</div><div style="position:absolute;left:445.5px;top:166.7px;font-size:37px;line-height:37px;font-weight:400;font-style:normal;color:#1e1e1e;white-space:pre;transform:scaleX(0.9521);transform-origin:0 0;">Ressources</div><div style="position:absolute;left:674.0px;top:166.7px;font-size:37px;line-height:37px;font-weight:400;font-style:normal;color:#8e8e8e;white-space:pre;transform:scaleX(0.9872);transform-origin:0 0;">Systèmes de fichiers</div><div style="position:absolute;left:0;top:0"></div><svg style="position:absolute;left:0;top:0" width="1920" height="2400"><line x1="451.5" y1="299" x2="451.5" y2="687" stroke="#dcdcdc" stroke-width="2"/><line x1="732.0" y1="299" x2="732.0" y2="687" stroke="#dcdcdc" stroke-width="2"/><line x1="1012.5" y1="299" x2="1012.5" y2="687" stroke="#dcdcdc" stroke-width="2"/><line x1="1293.0" y1="299" x2="1293.0" y2="687" stroke="#dcdcdc" stroke-width="2"/><line x1="1573.5" y1="299" x2="1573.5" y2="687" stroke="#dcdcdc" stroke-width="2"/><line x1="164" y1="375" x2="1854" y2="375" stroke="#dcdcdc" stroke-width="2"/><line x1="164" y1="451" x2="1854" y2="451" stroke="#dcdcdc" stroke-width="2"/><line x1="164" y1="527" x2="1854" y2="527" stroke="#dcdcdc" stroke-width="2"/><line x1="164" y1="603" x2="1854" y2="603" stroke="#dcdcdc" stroke-width="2"/><defs><clipPath id="cpuclip"><rect x="171" y="293" width="1683" height="392"/></clipPath></defs><path d="M154.9,390.6C159.6,397.9 173.7,435.8 183.0,434.6C192.3,433.4 201.7,385.9 211.0,383.4C220.4,380.9 229.8,409.0 239.1,419.6C248.4,430.3 257.8,446.9 267.1,447.2C276.5,447.5 285.8,427.6 295.2,421.4C304.6,415.2 313.9,409.1 323.2,410.0C332.6,411.0 341.9,412.6 351.3,427.0C360.6,441.4 370.0,488.7 379.4,496.4C388.7,504.1 398.0,491.5 407.4,473.5C416.8,455.5 426.1,407.9 435.4,388.5C444.8,369.1 454.1,362.8 463.5,357.1C472.9,351.4 482.2,353.1 491.6,354.2C500.9,355.4 510.2,356.2 519.6,363.8C529.0,371.3 538.3,392.4 547.6,399.5C557.0,406.6 566.4,412.8 575.7,406.6C585.1,400.4 594.4,362.7 603.8,362.3C613.1,361.8 622.4,401.8 631.8,404.0C641.1,406.2 650.5,364.8 659.9,375.3C669.2,385.9 678.6,454.2 687.9,467.2C697.3,480.3 706.6,473.8 716.0,453.7C725.3,433.6 734.6,351.2 744.0,346.7C753.4,342.1 762.7,418.9 772.0,426.3C781.4,433.7 790.7,397.4 800.1,390.9C809.4,384.3 818.8,376.0 828.2,387.1C837.5,398.2 846.9,471.2 856.2,457.7C865.6,444.2 874.9,323.6 884.2,306.1C893.6,288.6 902.9,326.6 912.3,352.6C921.6,378.5 931.0,457.2 940.3,461.9C949.7,466.7 959.1,382.5 968.4,381.1C977.8,379.7 987.1,439.5 996.5,453.4C1005.8,467.2 1015.1,462.7 1024.5,464.2C1033.8,465.6 1043.2,471.4 1052.5,462.0C1061.9,452.6 1071.2,419.0 1080.6,407.9C1089.9,396.7 1099.3,398.4 1108.7,395.0C1118.0,391.6 1127.4,396.4 1136.7,387.5C1146.0,378.7 1155.4,345.7 1164.8,342.0C1174.1,338.4 1183.5,351.2 1192.8,365.6C1202.2,380.1 1211.5,420.4 1220.9,428.7C1230.2,436.9 1239.6,423.5 1248.9,415.0C1258.2,406.5 1267.6,378.3 1277.0,377.6C1286.3,376.9 1295.7,392.6 1305.0,410.9C1314.3,429.1 1323.7,482.0 1333.1,486.8C1342.4,491.6 1351.8,454.5 1361.1,439.9C1370.5,425.3 1379.8,404.0 1389.2,399.3C1398.5,394.6 1407.9,422.7 1417.2,411.9C1426.5,401.1 1435.9,325.2 1445.2,334.3C1454.6,343.4 1464.0,461.5 1473.3,466.5C1482.7,471.4 1492.0,376.6 1501.4,364.1C1510.7,351.6 1520.1,386.2 1529.4,391.4C1538.8,396.6 1548.1,377.5 1557.5,395.3C1566.8,413.1 1576.2,505.9 1585.5,498.1C1594.8,490.3 1604.2,377.9 1613.6,348.7C1622.9,319.5 1632.3,324.8 1641.6,323.0C1651.0,321.1 1660.3,318.3 1669.7,337.6C1679.0,356.9 1688.4,430.7 1697.7,438.8C1707.0,446.8 1716.4,396.7 1725.8,385.9C1735.1,375.2 1744.5,388.6 1753.8,374.1C1763.2,359.6 1772.5,296.6 1781.9,299.0C1791.2,301.4 1800.6,376.1 1809.9,388.2C1819.2,400.4 1828.6,383.3 1838.0,372.0C1847.3,360.6 1861.3,328.8 1866.0,320.1" fill="none" stroke="#ff6a00" stroke-width="2.2" clip-path="url(#cpuclip)"/><path d="M154.9,459.4C159.6,440.4 173.7,349.7 183.0,345.3C192.3,340.9 201.7,413.9 211.0,432.8C220.4,451.8 229.8,459.4 239.1,458.8C248.4,458.3 257.8,444.1 267.1,429.7C276.5,415.4 285.8,379.3 295.2,372.9C304.6,366.4 313.9,388.2 323.2,391.2C332.6,394.3 341.9,368.2 351.3,391.1C360.6,414.0 370.0,512.8 379.4,528.6C388.7,544.4 398.0,501.5 407.4,486.1C416.8,470.8 426.1,444.4 435.4,436.5C444.8,428.6 454.1,449.8 463.5,438.7C472.9,427.6 482.2,373.1 491.6,369.8C500.9,366.6 510.2,414.3 519.6,419.2C529.0,424.1 538.3,397.1 547.6,399.1C557.0,401.1 566.4,433.9 575.7,431.2C585.1,428.5 594.4,383.1 603.8,382.9C613.1,382.7 622.4,422.4 631.8,430.1C641.1,437.8 650.5,430.7 659.9,429.0C669.2,427.3 678.6,417.2 687.9,419.9C697.3,422.6 706.6,442.7 716.0,445.1C725.3,447.5 734.6,426.6 744.0,434.2C753.4,441.7 762.7,501.9 772.0,490.5C781.4,479.0 790.7,386.7 800.1,365.6C809.4,344.6 818.8,355.1 828.2,364.0C837.5,373.0 846.9,409.8 856.2,419.5C865.6,429.3 874.9,413.4 884.2,422.3C893.6,431.1 902.9,466.1 912.3,472.7C921.6,479.4 931.0,473.9 940.3,462.2C949.7,450.6 959.1,418.0 968.4,402.9C977.8,387.8 987.1,368.7 996.5,371.4C1005.8,374.1 1015.1,399.5 1024.5,419.1C1033.8,438.6 1043.2,471.7 1052.5,488.6C1061.9,505.4 1071.2,537.9 1080.6,520.3C1089.9,502.8 1099.3,402.0 1108.7,383.3C1118.0,364.6 1127.4,404.1 1136.7,408.3C1146.0,412.5 1155.4,407.9 1164.8,408.6C1174.1,409.3 1183.5,403.5 1192.8,412.5C1202.2,421.5 1211.5,479.9 1220.9,462.5C1230.2,445.0 1239.6,321.9 1248.9,307.7C1258.2,293.5 1267.6,365.9 1277.0,377.3C1286.3,388.7 1295.7,368.9 1305.0,376.4C1314.3,383.9 1323.7,403.5 1333.1,422.3C1342.4,441.1 1351.8,490.5 1361.1,489.1C1370.5,487.7 1379.8,412.8 1389.2,413.8C1398.5,414.8 1407.9,501.9 1417.2,495.0C1426.5,488.1 1435.9,369.5 1445.2,372.3C1454.6,375.1 1464.0,507.1 1473.3,511.7C1482.7,516.4 1492.0,424.2 1501.4,400.4C1510.7,376.5 1520.1,381.4 1529.4,368.6C1538.8,355.8 1548.1,309.8 1557.5,323.5C1566.8,337.1 1576.2,430.9 1585.5,450.7C1594.8,470.5 1604.2,453.8 1613.6,442.0C1622.9,430.3 1632.3,396.5 1641.6,380.1C1651.0,363.7 1660.3,333.4 1669.7,343.6C1679.0,353.8 1688.4,432.6 1697.7,441.5C1707.0,450.5 1716.4,402.3 1725.8,397.2C1735.1,392.0 1744.5,403.5 1753.8,410.7C1763.2,417.9 1772.5,435.5 1781.9,440.4C1791.2,445.3 1800.6,459.0 1809.9,440.0C1819.2,421.0 1828.6,340.8 1838.0,326.6C1847.3,312.4 1861.3,350.0 1866.0,354.7" fill="none" stroke="#c8102e" stroke-width="2.2" clip-path="url(#cpuclip)"/><path d="M154.9,374.1C159.6,382.2 173.7,416.9 183.0,423.0C192.3,429.2 201.7,401.6 211.0,410.9C220.4,420.3 229.8,470.3 239.1,479.1C248.4,487.9 257.8,462.9 267.1,463.4C276.5,463.9 285.8,478.0 295.2,482.1C304.6,486.2 313.9,506.0 323.2,488.2C332.6,470.4 341.9,390.3 351.3,375.4C360.6,360.4 370.0,390.3 379.4,398.5C388.7,406.6 398.0,430.9 407.4,424.3C416.8,417.7 426.1,361.8 435.4,358.9C444.8,356.1 454.1,396.8 463.5,407.3C472.9,417.8 482.2,422.7 491.6,421.9C500.9,421.1 510.2,398.4 519.6,402.4C529.0,406.3 538.3,432.7 547.6,445.4C557.0,458.2 566.4,480.2 575.7,478.8C585.1,477.4 594.4,434.6 603.8,437.1C613.1,439.6 622.4,492.4 631.8,493.9C641.1,495.5 650.5,454.0 659.9,446.3C669.2,438.7 678.6,448.4 687.9,448.1C697.3,447.9 706.6,458.3 716.0,445.0C725.3,431.6 734.6,370.5 744.0,367.9C753.4,365.2 762.7,422.5 772.0,428.9C781.4,435.3 790.7,415.6 800.1,406.4C809.4,397.1 818.8,366.9 828.2,373.4C837.5,379.8 846.9,427.1 856.2,445.1C865.6,463.2 874.9,490.4 884.2,481.8C893.6,473.2 902.9,390.9 912.3,393.4C921.6,395.8 931.0,502.2 940.3,496.5C949.7,490.7 959.1,367.4 968.4,358.8C977.8,350.2 987.1,440.0 996.5,445.0C1005.8,449.9 1015.1,391.7 1024.5,388.7C1033.8,385.8 1043.2,407.5 1052.5,427.1C1061.9,446.6 1071.2,508.5 1080.6,505.8C1089.9,503.1 1099.3,421.4 1108.7,410.8C1118.0,400.3 1127.4,448.7 1136.7,442.7C1146.0,436.7 1155.4,375.5 1164.8,374.6C1174.1,373.6 1183.5,438.2 1192.8,437.1C1202.2,435.9 1211.5,371.9 1220.9,367.7C1230.2,363.4 1239.6,409.0 1248.9,411.3C1258.2,413.7 1267.6,372.6 1277.0,381.6C1286.3,390.6 1295.7,455.9 1305.0,465.4C1314.3,475.0 1323.7,433.4 1333.1,438.9C1342.4,444.4 1351.8,502.9 1361.1,498.5C1370.5,494.2 1379.8,427.7 1389.2,412.8C1398.5,397.9 1407.9,406.7 1417.2,409.0C1426.5,411.3 1435.9,425.3 1445.2,426.6C1454.6,427.9 1464.0,428.6 1473.3,416.6C1482.7,404.7 1492.0,361.5 1501.4,354.9C1510.7,348.3 1520.1,365.9 1529.4,377.1C1538.8,388.2 1548.1,411.9 1557.5,421.8C1566.8,431.7 1576.2,438.4 1585.5,436.6C1594.8,434.9 1604.2,426.5 1613.6,411.3C1622.9,396.1 1632.3,358.1 1641.6,345.3C1651.0,332.4 1660.3,323.8 1669.7,334.1C1679.0,344.4 1688.4,402.7 1697.7,407.1C1707.0,411.5 1716.4,365.3 1725.8,360.5C1735.1,355.7 1744.5,374.4 1753.8,378.4C1763.2,382.5 1772.5,377.7 1781.9,384.8C1791.2,391.9 1800.6,420.3 1809.9,421.2C1819.2,422.0 1828.6,388.0 1838.0,389.8C1847.3,391.7 1861.3,425.3 1866.0,432.4" fill="none" stroke="#4ea93b" stroke-width="2.2" clip-path="url(#cpuclip)"/><path d="M154.9,481.7C159.6,460.4 173.7,370.0 183.0,353.7C192.3,337.5 201.7,370.2 211.0,384.1C220.4,398.0 229.8,423.5 239.1,437.3C248.4,451.1 257.8,468.8 267.1,467.1C276.5,465.4 285.8,437.8 295.2,427.2C304.6,416.5 313.9,402.9 323.2,403.2C332.6,403.5 341.9,421.5 351.3,428.9C360.6,436.4 370.0,444.9 379.4,448.1C388.7,451.3 398.0,449.1 407.4,448.1C416.8,447.1 426.1,441.8 435.4,442.0C444.8,442.1 454.1,450.4 463.5,448.9C472.9,447.4 482.2,433.2 491.6,433.1C500.9,433.0 510.2,454.6 519.6,448.2C529.0,441.9 538.3,381.6 547.6,395.0C557.0,408.4 566.4,531.1 575.7,528.6C585.1,526.2 594.4,391.8 603.8,380.2C613.1,368.7 622.4,444.1 631.8,459.2C641.1,474.3 650.5,472.3 659.9,470.8C669.2,469.3 678.6,465.2 687.9,450.3C697.3,435.3 706.6,385.8 716.0,381.0C725.3,376.3 734.6,411.7 744.0,421.8C753.4,431.9 762.7,436.3 772.0,441.7C781.4,447.0 790.7,456.5 800.1,454.1C809.4,451.6 818.8,440.1 828.2,427.1C837.5,414.1 846.9,377.4 856.2,376.0C865.6,374.7 874.9,403.4 884.2,418.9C893.6,434.4 902.9,452.4 912.3,469.2C921.6,485.9 931.0,521.8 940.3,519.4C949.7,517.1 959.1,456.2 968.4,455.3C977.8,454.4 987.1,525.6 996.5,513.9C1005.8,502.2 1015.1,396.8 1024.5,385.1C1033.8,373.3 1043.2,435.5 1052.5,443.4C1061.9,451.2 1071.2,442.6 1080.6,432.3C1089.9,421.9 1099.3,379.7 1108.7,381.3C1118.0,382.9 1127.4,453.2 1136.7,442.1C1146.0,430.9 1155.4,323.4 1164.8,314.4C1174.1,305.3 1183.5,363.5 1192.8,387.7C1202.2,412.0 1211.5,439.8 1220.9,460.0C1230.2,480.2 1239.6,508.9 1248.9,508.7C1258.2,508.6 1267.6,483.2 1277.0,459.0C1286.3,434.7 1295.7,378.9 1305.0,363.0C1314.3,347.1 1323.7,348.7 1333.1,363.6C1342.4,378.6 1351.8,452.2 1361.1,452.7C1370.5,453.3 1379.8,367.6 1389.2,366.9C1398.5,366.2 1407.9,440.8 1417.2,448.3C1426.5,455.7 1435.9,411.8 1445.2,411.8C1454.6,411.8 1464.0,454.2 1473.3,448.4C1482.7,442.6 1492.0,370.2 1501.4,377.1C1510.7,384.0 1520.1,481.2 1529.4,489.8C1538.8,498.5 1548.1,435.2 1557.5,429.0C1566.8,422.8 1576.2,464.2 1585.5,452.9C1594.8,441.6 1604.2,381.4 1613.6,361.3C1622.9,341.1 1632.3,342.2 1641.6,331.9C1651.0,321.5 1660.3,285.0 1669.7,299.0C1679.0,313.0 1688.4,392.4 1697.7,415.6C1707.0,438.8 1716.4,440.9 1725.8,438.2C1735.1,435.4 1744.5,400.5 1753.8,399.2C1763.2,397.9 1772.5,441.3 1781.9,430.4C1791.2,419.5 1800.6,346.5 1809.9,333.7C1819.2,320.9 1828.6,340.8 1838.0,353.7C1847.3,366.6 1861.3,401.7 1866.0,411.3" fill="none" stroke="#2f7fb8" stroke-width="2.2" clip-path="url(#cpuclip)"/><path d="M154.9,418.8C159.6,415.3 173.7,389.6 183.0,398.2C192.3,406.8 201.7,459.9 211.0,470.4C220.4,480.8 229.8,461.5 239.1,461.1C248.4,460.7 257.8,473.4 267.1,468.1C276.5,462.7 285.8,438.3 295.2,428.9C304.6,419.6 313.9,414.1 323.2,412.0C332.6,410.0 341.9,410.6 351.3,416.7C360.6,422.7 370.0,437.6 379.4,448.3C388.7,459.1 398.0,481.1 407.4,481.1C416.8,481.0 426.1,468.6 435.4,447.9C444.8,427.2 454.1,368.4 463.5,356.9C472.9,345.4 482.2,373.6 491.6,378.9C500.9,384.1 510.2,369.1 519.6,388.3C529.0,407.5 538.3,485.4 547.6,494.2C557.0,503.0 566.4,467.3 575.7,441.1C585.1,414.9 594.4,329.4 603.8,336.9C613.1,344.4 622.4,475.4 631.8,486.3C641.1,497.2 650.5,405.1 659.9,402.3C669.2,399.5 678.6,468.4 687.9,469.7C697.3,471.0 706.6,416.5 716.0,410.0C725.3,403.4 734.6,427.3 744.0,430.2C753.4,433.1 762.7,435.4 772.0,427.3C781.4,419.2 790.7,379.8 800.1,381.6C809.4,383.4 818.8,443.3 828.2,438.1C837.5,432.8 846.9,350.6 856.2,350.0C865.6,349.4 874.9,416.0 884.2,434.4C893.6,452.8 902.9,459.6 912.3,460.6C921.6,461.6 931.0,441.8 940.3,440.6C949.7,439.5 959.1,448.2 968.4,453.7C977.8,459.1 987.1,483.4 996.5,473.2C1005.8,463.1 1015.1,403.4 1024.5,392.7C1033.8,382.0 1043.2,392.4 1052.5,409.2C1061.9,426.0 1071.2,491.9 1080.6,493.6C1089.9,495.3 1099.3,444.8 1108.7,419.4C1118.0,393.9 1127.4,360.7 1136.7,340.7C1146.0,320.6 1155.4,284.2 1164.8,299.0C1174.1,313.8 1183.5,408.7 1192.8,429.3C1202.2,449.8 1211.5,417.4 1220.9,422.3C1230.2,427.1 1239.6,450.8 1248.9,458.4C1258.2,466.1 1267.6,476.1 1277.0,467.9C1286.3,459.8 1295.7,417.3 1305.0,409.8C1314.3,402.2 1323.7,422.9 1333.1,422.8C1342.4,422.8 1351.8,419.8 1361.1,409.5C1370.5,399.3 1379.8,356.1 1389.2,361.6C1398.5,367.0 1407.9,426.7 1417.2,442.2C1426.5,457.6 1435.9,463.9 1445.2,454.3C1454.6,444.7 1464.0,392.4 1473.3,384.5C1482.7,376.6 1492.0,398.5 1501.4,407.0C1510.7,415.4 1520.1,437.2 1529.4,435.1C1538.8,433.0 1548.1,397.4 1557.5,394.4C1566.8,391.4 1576.2,412.9 1585.5,417.3C1594.8,421.7 1604.2,419.5 1613.6,420.9C1622.9,422.2 1632.3,445.5 1641.6,425.1C1651.0,404.8 1660.3,298.8 1669.7,299.0C1679.0,299.2 1688.4,413.7 1697.7,426.4C1707.0,439.0 1716.4,389.6 1725.8,374.9C1735.1,360.2 1744.5,340.1 1753.8,338.1C1763.2,336.2 1772.5,355.8 1781.9,363.2C1791.2,370.6 1800.6,385.9 1809.9,382.4C1819.2,378.9 1828.6,329.0 1838.0,342.1C1847.3,355.2 1861.3,441.0 1866.0,460.8" fill="none" stroke="#ff6600" stroke-width="2.2" clip-path="url(#cpuclip)"/><path d="M154.9,490.6C159.6,477.9 173.7,432.0 183.0,414.5C192.3,397.0 201.7,390.0 211.0,385.6C220.4,381.2 229.8,379.2 239.1,388.3C248.4,397.3 257.8,431.3 267.1,439.8C276.5,448.3 285.8,443.2 295.2,439.2C304.6,435.2 313.9,420.3 323.2,415.7C332.6,411.1 341.9,406.5 351.3,411.6C360.6,416.6 370.0,442.9 379.4,446.1C388.7,449.3 398.0,434.2 407.4,430.8C416.8,427.4 426.1,422.5 435.4,425.7C444.8,428.8 454.1,449.6 463.5,449.9C472.9,450.1 482.2,442.0 491.6,427.3C500.9,412.7 510.2,370.0 519.6,362.0C529.0,354.0 538.3,373.9 547.6,379.4C557.0,384.9 566.4,402.2 575.7,394.9C585.1,387.5 594.4,334.3 603.8,335.4C613.1,336.5 622.4,383.1 631.8,401.5C641.1,420.0 650.5,441.8 659.9,446.2C669.2,450.5 678.6,424.0 687.9,427.7C697.3,431.3 706.6,467.1 716.0,468.0C725.3,468.9 734.6,433.4 744.0,433.0C753.4,432.5 762.7,470.7 772.0,465.3C781.4,459.9 790.7,404.0 800.1,400.6C809.4,397.2 818.8,442.4 828.2,445.1C837.5,447.8 846.9,426.4 856.2,416.7C865.6,407.1 874.9,395.1 884.2,387.2C893.6,379.3 902.9,350.5 912.3,369.4C921.6,388.3 931.0,487.4 940.3,500.6C949.7,513.8 959.1,461.1 968.4,448.6C977.8,436.1 987.1,421.7 996.5,425.8C1005.8,429.9 1015.1,470.8 1024.5,473.0C1033.8,475.3 1043.2,444.1 1052.5,439.5C1061.9,434.9 1071.2,444.8 1080.6,445.6C1089.9,446.3 1099.3,436.6 1108.7,443.8C1118.0,450.9 1127.4,509.8 1136.7,488.5C1146.0,467.2 1155.4,324.1 1164.8,315.9C1174.1,307.8 1183.5,419.9 1192.8,439.6C1202.2,459.4 1211.5,446.8 1220.9,434.2C1230.2,421.5 1239.6,370.5 1248.9,363.7C1258.2,357.0 1267.6,404.3 1277.0,393.5C1286.3,382.8 1295.7,298.1 1305.0,299.0C1314.3,299.9 1323.7,379.3 1333.1,399.1C1342.4,418.8 1351.8,416.7 1361.1,417.6C1370.5,418.5 1379.8,412.6 1389.2,404.4C1398.5,396.3 1407.9,370.1 1417.2,368.9C1426.5,367.6 1435.9,390.6 1445.2,397.2C1454.6,403.8 1464.0,417.4 1473.3,408.4C1482.7,399.5 1492.0,336.0 1501.4,343.5C1510.7,351.1 1520.1,446.9 1529.4,453.6C1538.8,460.3 1548.1,388.9 1557.5,383.9C1566.8,378.9 1576.2,415.9 1585.5,423.6C1594.8,431.4 1604.2,437.7 1613.6,430.5C1622.9,423.3 1632.3,393.7 1641.6,380.4C1651.0,367.2 1660.3,348.0 1669.7,351.1C1679.0,354.2 1688.4,390.1 1697.7,399.2C1707.0,408.3 1716.4,395.0 1725.8,405.7C1735.1,416.3 1744.5,468.4 1753.8,463.0C1763.2,457.7 1772.5,381.3 1781.9,373.5C1791.2,365.8 1800.6,405.1 1809.9,416.8C1819.2,428.4 1828.6,449.0 1838.0,443.7C1847.3,438.3 1861.3,394.5 1866.0,384.7" fill="none" stroke="#6a00cc" stroke-width="2.2" clip-path="url(#cpuclip)"/><path d="M154.9,516.8C159.6,500.8 173.7,440.2 183.0,420.7C192.3,401.2 201.7,399.0 211.0,399.8C220.4,400.7 229.8,417.4 239.1,425.7C248.4,434.1 257.8,450.3 267.1,449.8C276.5,449.4 285.8,420.7 295.2,422.9C304.6,425.0 313.9,463.5 323.2,462.8C332.6,462.0 341.9,416.2 351.3,418.5C360.6,420.7 370.0,468.2 379.4,476.3C388.7,484.4 398.0,479.6 407.4,467.1C416.8,454.6 426.1,413.7 435.4,401.3C444.8,388.9 454.1,404.9 463.5,392.7C472.9,380.5 482.2,308.7 491.6,328.0C500.9,347.3 510.2,493.9 519.6,508.3C529.0,522.7 538.3,425.5 547.6,414.5C557.0,403.5 566.4,461.6 575.7,442.4C585.1,423.1 594.4,306.5 603.8,299.0C613.1,291.5 622.4,362.0 631.8,397.5C641.1,433.0 650.5,505.3 659.9,512.1C669.2,518.8 678.6,449.0 687.9,438.1C697.3,427.3 706.6,455.6 716.0,446.8C725.3,438.0 734.6,380.0 744.0,385.2C753.4,390.5 762.7,470.1 772.0,478.2C781.4,486.3 790.7,442.2 800.1,433.7C809.4,425.2 818.8,430.1 828.2,427.2C837.5,424.3 846.9,416.4 856.2,416.3C865.6,416.2 874.9,413.1 884.2,426.5C893.6,439.9 902.9,492.7 912.3,496.8C921.6,500.8 931.0,471.5 940.3,450.6C949.7,429.7 959.1,369.5 968.4,371.3C977.8,373.0 987.1,444.8 996.5,461.2C1005.8,477.5 1015.1,471.4 1024.5,469.5C1033.8,467.5 1043.2,461.0 1052.5,449.4C1061.9,437.9 1071.2,400.7 1080.6,400.3C1089.9,399.8 1099.3,443.9 1108.7,446.6C1118.0,449.2 1127.4,441.0 1136.7,416.4C1146.0,391.8 1155.4,291.0 1164.8,299.0C1174.1,307.0 1183.5,444.1 1192.8,464.3C1202.2,484.6 1211.5,410.8 1220.9,420.6C1230.2,430.3 1239.6,517.8 1248.9,522.7C1258.2,527.5 1267.6,465.5 1277.0,449.9C1286.3,434.2 1295.7,428.1 1305.0,428.7C1314.3,429.3 1323.7,453.2 1333.1,453.7C1342.4,454.1 1351.8,450.9 1361.1,431.4C1370.5,412.0 1379.8,335.5 1389.2,337.0C1398.5,338.6 1407.9,430.2 1417.2,440.8C1426.5,451.4 1435.9,417.7 1445.2,400.7C1454.6,383.7 1464.0,344.4 1473.3,338.7C1482.7,333.0 1492.0,341.9 1501.4,366.6C1510.7,391.2 1520.1,485.4 1529.4,486.5C1538.8,487.5 1548.1,380.5 1557.5,373.0C1566.8,365.4 1576.2,450.5 1585.5,441.0C1594.8,431.4 1604.2,311.5 1613.6,315.4C1622.9,319.4 1632.3,450.7 1641.6,464.9C1651.0,479.1 1660.3,400.6 1669.7,400.8C1679.0,401.0 1688.4,472.1 1697.7,466.2C1707.0,460.4 1716.4,372.7 1725.8,365.6C1735.1,358.5 1744.5,418.5 1753.8,423.5C1763.2,428.5 1772.5,394.8 1781.9,395.5C1791.2,396.3 1800.6,427.0 1809.9,427.9C1819.2,428.8 1828.6,414.8 1838.0,401.0C1847.3,387.1 1861.3,354.0 1866.0,344.6" fill="none" stroke="#990000" stroke-width="2.2" clip-path="url(#cpuclip)"/><path d="M154.9,418.8C159.6,418.5 173.7,413.3 183.0,417.1C192.3,420.9 201.7,430.5 211.0,441.4C220.4,452.4 229.8,481.6 239.1,482.6C248.4,483.7 257.8,472.4 267.1,447.7C276.5,423.0 285.8,336.3 295.2,334.3C304.6,332.3 313.9,418.8 323.2,435.5C332.6,452.2 341.9,426.4 351.3,434.5C360.6,442.5 370.0,472.6 379.4,483.7C388.7,494.9 398.0,506.9 407.4,501.4C416.8,495.9 426.1,463.5 435.4,450.9C444.8,438.3 454.1,444.7 463.5,425.6C472.9,406.4 482.2,339.3 491.6,336.0C500.9,332.7 510.2,386.7 519.6,405.8C529.0,425.0 538.3,435.4 547.6,450.9C557.0,466.4 566.4,513.9 575.7,498.9C585.1,483.9 594.4,371.6 603.8,361.1C613.1,350.6 622.4,413.5 631.8,435.9C641.1,458.2 650.5,484.8 659.9,495.0C669.2,505.3 678.6,508.7 687.9,497.5C697.3,486.3 706.6,446.5 716.0,427.7C725.3,408.9 734.6,387.3 744.0,384.5C753.4,381.7 762.7,404.9 772.0,411.1C781.4,417.2 790.7,417.4 800.1,421.4C809.4,425.4 818.8,438.5 828.2,434.9C837.5,431.2 846.9,404.8 856.2,399.6C865.6,394.4 874.9,414.2 884.2,403.7C893.6,393.2 902.9,318.3 912.3,336.7C921.6,355.1 931.0,499.3 940.3,514.2C949.7,529.0 959.1,443.6 968.4,425.8C977.8,408.1 987.1,405.6 996.5,407.8C1005.8,410.1 1015.1,440.7 1024.5,439.5C1033.8,438.3 1043.2,403.2 1052.5,400.7C1061.9,398.2 1071.2,419.0 1080.6,424.6C1089.9,430.1 1099.3,432.7 1108.7,433.7C1118.0,434.7 1127.4,436.3 1136.7,430.6C1146.0,424.9 1155.4,394.9 1164.8,399.5C1174.1,404.1 1183.5,473.3 1192.8,458.4C1202.2,443.5 1211.5,316.2 1220.9,309.9C1230.2,303.7 1239.6,406.2 1248.9,420.9C1258.2,435.5 1267.6,407.7 1277.0,397.8C1286.3,387.8 1295.7,362.0 1305.0,361.2C1314.3,360.3 1323.7,392.3 1333.1,392.6C1342.4,392.9 1351.8,358.5 1361.1,363.0C1370.5,367.4 1379.8,406.2 1389.2,419.4C1398.5,432.5 1407.9,452.3 1417.2,441.9C1426.5,431.5 1435.9,357.1 1445.2,356.9C1454.6,356.6 1464.0,430.4 1473.3,440.5C1482.7,450.5 1492.0,419.6 1501.4,417.2C1510.7,414.9 1520.1,427.4 1529.4,426.3C1538.8,425.2 1548.1,418.6 1557.5,410.8C1566.8,402.9 1576.2,379.3 1585.5,379.1C1594.8,378.9 1604.2,396.5 1613.6,409.6C1622.9,422.6 1632.3,460.7 1641.6,457.6C1651.0,454.4 1660.3,410.4 1669.7,390.9C1679.0,371.3 1688.4,343.5 1697.7,340.2C1707.0,337.0 1716.4,365.3 1725.8,371.4C1735.1,377.4 1744.5,373.0 1753.8,376.6C1763.2,380.1 1772.5,388.5 1781.9,392.5C1791.2,396.6 1800.6,409.9 1809.9,401.1C1819.2,392.2 1828.6,351.9 1838.0,339.5C1847.3,327.0 1861.3,328.7 1866.0,326.6" fill="none" stroke="#000099" stroke-width="2.2" clip-path="url(#cpuclip)"/><path d="M154.9,521.7C159.6,495.6 173.7,384.6 183.0,365.3C192.3,345.9 201.7,391.1 211.0,405.6C220.4,420.2 229.8,459.8 239.1,452.7C248.4,445.6 257.8,365.5 267.1,362.8C276.5,360.1 285.8,440.3 295.2,436.5C304.6,432.6 313.9,351.7 323.2,339.7C332.6,327.7 341.9,338.3 351.3,364.5C360.6,390.8 370.0,484.7 379.4,497.0C388.7,509.3 398.0,457.2 407.4,438.2C416.8,419.1 426.1,385.3 435.4,382.7C444.8,380.1 454.1,405.2 463.5,422.4C472.9,439.6 482.2,486.6 491.6,486.1C500.9,485.6 510.2,427.5 519.6,419.5C529.0,411.5 538.3,428.3 547.6,438.2C557.0,448.0 566.4,501.8 575.7,478.6C585.1,455.5 594.4,304.7 603.8,299.0C613.1,293.3 622.4,417.4 631.8,444.5C641.1,471.7 650.5,458.2 659.9,461.8C669.2,465.4 678.6,466.9 687.9,466.1C697.3,465.4 706.6,459.0 716.0,457.3C725.3,455.6 734.6,460.0 744.0,455.9C753.4,451.7 762.7,438.8 772.0,432.3C781.4,425.9 790.7,415.5 800.1,417.1C809.4,418.8 818.8,442.4 828.2,442.2C837.5,442.0 846.9,413.3 856.2,416.0C865.6,418.8 874.9,460.9 884.2,458.7C893.6,456.4 902.9,395.9 912.3,402.6C921.6,409.3 931.0,498.9 940.3,498.9C949.7,498.9 959.1,403.3 968.4,402.6C977.8,401.8 987.1,486.8 996.5,494.6C1005.8,502.4 1015.1,457.1 1024.5,449.5C1033.8,441.8 1043.2,445.3 1052.5,448.9C1061.9,452.6 1071.2,489.1 1080.6,471.1C1089.9,453.1 1099.3,350.0 1108.7,341.0C1118.0,332.0 1127.4,416.3 1136.7,417.3C1146.0,418.4 1155.4,342.0 1164.8,347.3C1174.1,352.6 1183.5,451.1 1192.8,449.0C1202.2,446.9 1211.5,344.3 1220.9,334.7C1230.2,325.1 1239.6,378.8 1248.9,391.3C1258.2,403.9 1267.6,399.6 1277.0,410.0C1286.3,420.4 1295.7,449.5 1305.0,453.8C1314.3,458.0 1323.7,447.9 1333.1,435.5C1342.4,423.0 1351.8,380.2 1361.1,379.2C1370.5,378.1 1379.8,412.3 1389.2,429.2C1398.5,446.0 1407.9,477.8 1417.2,480.2C1426.5,482.6 1435.9,447.3 1445.2,443.5C1454.6,439.7 1464.0,470.5 1473.3,457.2C1482.7,443.9 1492.0,365.9 1501.4,363.6C1510.7,361.3 1520.1,439.0 1529.4,443.2C1538.8,447.3 1548.1,412.3 1557.5,388.3C1566.8,364.3 1576.2,312.0 1585.5,299.0C1594.8,286.0 1604.2,283.8 1613.6,310.1C1622.9,336.4 1632.3,447.6 1641.6,456.6C1651.0,465.6 1660.3,373.6 1669.7,363.9C1679.0,354.3 1688.4,396.9 1697.7,398.7C1707.0,400.5 1716.4,384.5 1725.8,375.0C1735.1,365.4 1744.5,336.2 1753.8,341.3C1763.2,346.5 1772.5,392.1 1781.9,406.2C1791.2,420.3 1800.6,428.3 1809.9,425.8C1819.2,423.4 1828.6,398.0 1838.0,391.4C1847.3,384.8 1861.3,387.1 1866.0,386.3" fill="none" stroke="#ffcc00" stroke-width="2.2" clip-path="url(#cpuclip)"/><path d="M154.9,404.8C159.6,402.1 173.7,379.6 183.0,388.6C192.3,397.7 201.7,447.6 211.0,459.0C220.4,470.5 229.8,452.3 239.1,457.5C248.4,462.7 257.8,500.4 267.1,490.3C276.5,480.3 285.8,410.8 295.2,397.1C304.6,383.5 313.9,413.2 323.2,408.3C332.6,403.4 341.9,359.3 351.3,367.7C360.6,376.0 370.0,431.2 379.4,458.4C388.7,485.6 398.0,541.5 407.4,530.8C416.8,520.1 426.1,414.5 435.4,394.1C444.8,373.7 454.1,411.8 463.5,408.3C472.9,404.8 482.2,364.7 491.6,373.0C500.9,381.2 510.2,448.7 519.6,457.8C529.0,466.8 538.3,426.6 547.6,427.3C557.0,428.0 566.4,466.9 575.7,461.9C585.1,456.8 594.4,403.9 603.8,397.0C613.1,390.1 622.4,414.8 631.8,420.7C641.1,426.5 650.5,420.5 659.9,432.0C669.2,443.5 678.6,479.4 687.9,489.8C697.3,500.1 706.6,488.7 716.0,494.3C725.3,500.0 734.6,529.5 744.0,523.6C753.4,517.7 762.7,482.1 772.0,459.0C781.4,435.9 790.7,390.6 800.1,384.8C809.4,379.0 818.8,404.6 828.2,424.2C837.5,443.7 846.9,500.0 856.2,502.2C865.6,504.5 874.9,453.6 884.2,437.6C893.6,421.7 902.9,412.5 912.3,406.6C921.6,400.7 931.0,409.3 940.3,402.3C949.7,395.3 959.1,357.6 968.4,364.5C977.8,371.5 987.1,434.4 996.5,443.8C1005.8,453.2 1015.1,411.7 1024.5,421.0C1033.8,430.4 1043.2,496.5 1052.5,499.8C1061.9,503.1 1071.2,448.7 1080.6,440.9C1089.9,433.0 1099.3,451.8 1108.7,452.8C1118.0,453.8 1127.4,465.2 1136.7,446.7C1146.0,428.2 1155.4,343.8 1164.8,341.9C1174.1,340.0 1183.5,428.2 1192.8,435.4C1202.2,442.5 1211.5,392.5 1220.9,384.9C1230.2,377.2 1239.6,388.1 1248.9,389.4C1258.2,390.6 1267.6,393.5 1277.0,392.4C1286.3,391.2 1295.7,377.1 1305.0,382.5C1314.3,388.0 1323.7,411.3 1333.1,425.0C1342.4,438.6 1351.8,466.3 1361.1,464.4C1370.5,462.4 1379.8,422.1 1389.2,413.3C1398.5,404.4 1407.9,407.4 1417.2,411.3C1426.5,415.1 1435.9,442.2 1445.2,436.3C1454.6,430.5 1464.0,386.2 1473.3,376.4C1482.7,366.6 1492.0,373.1 1501.4,377.5C1510.7,381.8 1520.1,398.3 1529.4,402.4C1538.8,406.5 1548.1,393.6 1557.5,402.2C1566.8,410.7 1576.2,470.9 1585.5,453.7C1594.8,436.5 1604.2,297.7 1613.6,299.0C1622.9,300.3 1632.3,454.5 1641.6,461.5C1651.0,468.5 1660.3,347.2 1669.7,341.0C1679.0,334.8 1688.4,421.5 1697.7,424.3C1707.0,427.2 1716.4,359.9 1725.8,358.3C1735.1,356.8 1744.5,406.6 1753.8,415.1C1763.2,423.7 1772.5,416.0 1781.9,409.5C1791.2,403.0 1800.6,394.6 1809.9,376.1C1819.2,357.7 1828.6,292.3 1838.0,299.0C1847.3,305.7 1861.3,396.5 1866.0,416.0" fill="none" stroke="#009900" stroke-width="2.2" clip-path="url(#cpuclip)"/><path d="M154.9,455.7C159.6,443.4 173.7,386.0 183.0,381.8C192.3,377.6 201.7,425.7 211.0,430.7C220.4,435.6 229.8,401.7 239.1,411.6C248.4,421.4 257.8,490.8 267.1,489.8C276.5,488.8 285.8,420.6 295.2,405.6C304.6,390.6 313.9,408.3 323.2,399.9C332.6,391.4 341.9,347.9 351.3,354.8C360.6,361.7 370.0,416.3 379.4,441.4C388.7,466.5 398.0,514.6 407.4,505.3C416.8,496.0 426.1,392.9 435.4,385.6C444.8,378.3 454.1,465.1 463.5,461.3C472.9,457.6 482.2,382.6 491.6,363.3C500.9,344.0 510.2,338.3 519.6,345.5C529.0,352.8 538.3,388.2 547.6,406.7C557.0,425.2 566.4,470.6 575.7,456.5C585.1,442.4 594.4,326.8 603.8,322.0C613.1,317.3 622.4,399.1 631.8,428.1C641.1,457.1 650.5,489.1 659.9,495.8C669.2,502.5 678.6,489.4 687.9,468.3C697.3,447.2 706.6,374.6 716.0,369.4C725.3,364.2 734.6,426.7 744.0,437.0C753.4,447.3 762.7,430.2 772.0,431.2C781.4,432.3 790.7,433.6 800.1,443.3C809.4,453.0 818.8,491.0 828.2,489.2C837.5,487.5 846.9,449.5 856.2,432.8C865.6,416.1 874.9,391.9 884.2,389.0C893.6,386.0 902.9,400.6 912.3,415.1C921.6,429.6 931.0,462.4 940.3,475.9C949.7,489.5 959.1,507.3 968.4,496.3C977.8,485.3 987.1,425.7 996.5,409.7C1005.8,393.7 1015.1,399.0 1024.5,400.2C1033.8,401.4 1043.2,421.6 1052.5,416.7C1061.9,411.8 1071.2,364.1 1080.6,370.9C1089.9,377.7 1099.3,445.8 1108.7,457.3C1118.0,468.8 1127.4,460.9 1136.7,440.0C1146.0,419.1 1155.4,346.4 1164.8,331.9C1174.1,317.4 1183.5,330.6 1192.8,352.9C1202.2,375.2 1211.5,448.4 1220.9,465.6C1230.2,482.7 1239.6,458.3 1248.9,455.8C1258.2,453.3 1267.6,463.6 1277.0,450.5C1286.3,437.3 1295.7,392.5 1305.0,376.9C1314.3,361.3 1323.7,350.5 1333.1,356.9C1342.4,363.4 1351.8,398.6 1361.1,415.5C1370.5,432.4 1379.8,455.7 1389.2,458.2C1398.5,460.8 1407.9,439.5 1417.2,431.0C1426.5,422.5 1435.9,398.0 1445.2,407.5C1454.6,417.0 1464.0,501.1 1473.3,488.0C1482.7,474.9 1492.0,337.1 1501.4,328.8C1510.7,320.5 1520.1,432.7 1529.4,438.2C1538.8,443.7 1548.1,358.8 1557.5,361.8C1566.8,364.8 1576.2,460.2 1585.5,456.1C1594.8,451.9 1604.2,334.3 1613.6,337.1C1622.9,339.9 1632.3,473.0 1641.6,472.7C1651.0,472.5 1660.3,335.3 1669.7,335.6C1679.0,335.9 1688.4,478.0 1697.7,474.4C1707.0,470.9 1716.4,327.2 1725.8,314.4C1735.1,301.7 1744.5,374.5 1753.8,397.9C1763.2,421.4 1772.5,450.9 1781.9,455.0C1791.2,459.1 1800.6,437.6 1809.9,422.2C1819.2,406.9 1828.6,363.1 1838.0,363.0C1847.3,363.0 1861.3,412.0 1866.0,421.8" fill="none" stroke="#cc6600" stroke-width="2.2" clip-path="url(#cpuclip)"/><path d="M154.9,475.8C159.6,464.6 173.7,419.4 183.0,408.8C192.3,398.3 201.7,391.9 211.0,412.3C220.4,432.6 229.8,520.2 239.1,530.8C248.4,541.4 257.8,495.3 267.1,475.6C276.5,456.0 285.8,424.4 295.2,412.7C304.6,401.0 313.9,413.7 323.2,405.4C332.6,397.1 341.9,349.9 351.3,362.9C360.6,375.9 370.0,484.7 379.4,483.5C388.7,482.3 398.0,373.0 407.4,355.8C416.8,338.6 426.1,372.0 435.4,380.2C444.8,388.4 454.1,410.0 463.5,404.9C472.9,399.9 482.2,356.1 491.6,349.9C500.9,343.7 510.2,355.0 519.6,367.7C529.0,380.5 538.3,411.2 547.6,426.4C557.0,441.7 566.4,475.5 575.7,459.2C585.1,442.9 594.4,335.6 603.8,328.7C613.1,321.8 622.4,385.8 631.8,417.9C641.1,450.1 650.5,508.2 659.9,521.6C669.2,535.0 678.6,517.2 687.9,498.2C697.3,479.2 706.6,420.3 716.0,407.4C725.3,394.4 734.6,417.6 744.0,420.6C753.4,423.5 762.7,427.7 772.0,424.9C781.4,422.1 790.7,405.5 800.1,404.0C809.4,402.6 818.8,425.3 828.2,416.2C837.5,407.0 846.9,347.5 856.2,349.3C865.6,351.0 874.9,411.7 884.2,426.7C893.6,441.7 902.9,434.5 912.3,439.4C921.6,444.3 931.0,465.8 940.3,456.1C949.7,446.5 959.1,386.2 968.4,381.4C977.8,376.5 987.1,429.0 996.5,427.0C1005.8,425.0 1015.1,361.3 1024.5,369.5C1033.8,377.8 1043.2,475.4 1052.5,476.6C1061.9,477.7 1071.2,385.5 1080.6,376.2C1089.9,367.0 1099.3,407.3 1108.7,420.9C1118.0,434.4 1127.4,469.3 1136.7,457.4C1146.0,445.6 1155.4,370.0 1164.8,349.9C1174.1,329.7 1183.5,333.6 1192.8,336.5C1202.2,339.3 1211.5,345.5 1220.9,367.0C1230.2,388.4 1239.6,440.2 1248.9,465.3C1258.2,490.5 1267.6,523.8 1277.0,517.6C1286.3,511.5 1295.7,440.9 1305.0,428.5C1314.3,416.2 1323.7,448.0 1333.1,443.4C1342.4,438.7 1351.8,421.8 1361.1,400.7C1370.5,379.5 1379.8,316.1 1389.2,316.6C1398.5,317.0 1407.9,392.0 1417.2,403.2C1426.5,414.4 1435.9,373.5 1445.2,383.6C1454.6,393.7 1464.0,459.1 1473.3,463.7C1482.7,468.4 1492.0,417.8 1501.4,411.5C1510.7,405.1 1520.1,426.2 1529.4,425.6C1538.8,424.9 1548.1,428.8 1557.5,407.7C1566.8,386.6 1576.2,300.8 1585.5,299.0C1594.8,297.2 1604.2,373.5 1613.6,397.0C1622.9,420.4 1632.3,450.5 1641.6,439.8C1651.0,429.1 1660.3,339.4 1669.7,332.6C1679.0,325.8 1688.4,384.7 1697.7,399.1C1707.0,413.4 1716.4,430.0 1725.8,418.7C1735.1,407.5 1744.5,333.8 1753.8,331.5C1763.2,329.3 1772.5,383.0 1781.9,405.4C1791.2,427.8 1800.6,472.8 1809.9,465.9C1819.2,458.9 1828.6,380.9 1838.0,363.7C1847.3,346.5 1861.3,362.9 1866.0,362.8" fill="none" stroke="#330099" stroke-width="2.2" clip-path="url(#cpuclip)"/><path d="M154.9,469.6C159.6,456.6 173.7,407.9 183.0,391.8C192.3,375.6 201.7,358.9 211.0,372.8C220.4,386.7 229.8,448.8 239.1,475.1C248.4,501.4 257.8,522.5 267.1,530.8C276.5,539.1 285.8,543.2 295.2,525.2C304.6,507.1 313.9,450.9 323.2,422.4C332.6,393.9 341.9,355.2 351.3,354.1C360.6,353.0 370.0,407.9 379.4,415.9C388.7,423.9 398.0,415.1 407.4,402.1C416.8,389.2 426.1,335.6 435.4,338.0C444.8,340.5 454.1,414.6 463.5,416.8C472.9,418.9 482.2,342.8 491.6,351.1C500.9,359.4 510.2,458.2 519.6,466.8C529.0,475.5 538.3,411.0 547.6,403.0C557.0,395.0 566.4,423.7 575.7,418.8C585.1,413.8 594.4,367.8 603.8,373.4C613.1,379.0 622.4,432.9 631.8,452.4C641.1,472.0 650.5,491.3 659.9,490.6C669.2,490.0 678.6,467.8 687.9,448.6C697.3,429.3 706.6,376.6 716.0,375.0C725.3,373.5 734.6,432.9 744.0,439.5C753.4,446.2 762.7,412.1 772.0,414.9C781.4,417.6 790.7,456.6 800.1,456.1C809.4,455.6 818.8,412.4 828.2,411.8C837.5,411.2 846.9,456.6 856.2,452.6C865.6,448.6 874.9,391.5 884.2,388.1C893.6,384.7 902.9,420.7 912.3,432.1C921.6,443.5 931.0,455.9 940.3,456.4C949.7,457.0 959.1,427.2 968.4,435.3C977.8,443.5 987.1,504.3 996.5,505.4C1005.8,506.5 1015.1,456.9 1024.5,442.0C1033.8,427.2 1043.2,429.9 1052.5,416.2C1061.9,402.5 1071.2,353.8 1080.6,359.8C1089.9,365.9 1099.3,448.5 1108.7,452.5C1118.0,456.5 1127.4,407.0 1136.7,384.0C1146.0,360.9 1155.4,310.8 1164.8,314.1C1174.1,317.5 1183.5,379.7 1192.8,404.0C1202.2,428.4 1211.5,455.3 1220.9,460.2C1230.2,465.1 1239.6,433.6 1248.9,433.7C1258.2,433.8 1267.6,474.2 1277.0,460.6C1286.3,447.1 1295.7,365.1 1305.0,352.3C1314.3,339.5 1323.7,379.4 1333.1,383.9C1342.4,388.4 1351.8,358.1 1361.1,379.1C1370.5,400.1 1379.8,505.1 1389.2,509.9C1398.5,514.8 1407.9,431.8 1417.2,408.2C1426.5,384.6 1435.9,356.7 1445.2,368.2C1454.6,379.7 1464.0,484.5 1473.3,477.4C1482.7,470.3 1492.0,336.0 1501.4,325.4C1510.7,314.9 1520.1,402.4 1529.4,414.3C1538.8,426.1 1548.1,393.4 1557.5,396.4C1566.8,399.3 1576.2,427.8 1585.5,432.0C1594.8,436.2 1604.2,421.4 1613.6,421.5C1622.9,421.5 1632.3,452.9 1641.6,432.5C1651.0,412.1 1660.3,305.4 1669.7,299.0C1679.0,292.6 1688.4,383.7 1697.7,394.1C1707.0,404.4 1716.4,358.7 1725.8,361.2C1735.1,363.6 1744.5,399.4 1753.8,408.8C1763.2,418.2 1772.5,413.2 1781.9,417.6C1791.2,421.9 1800.6,435.8 1809.9,434.9C1819.2,433.9 1828.6,426.5 1838.0,411.9C1847.3,397.3 1861.3,358.1 1866.0,347.3" fill="none" stroke="#cc0066" stroke-width="2.2" clip-path="url(#cpuclip)"/><path d="M154.9,466.9C159.6,453.3 173.7,387.6 183.0,385.0C192.3,382.5 201.7,448.6 211.0,451.6C220.4,454.6 229.8,401.5 239.1,402.8C248.4,404.2 257.8,459.5 267.1,459.6C276.5,459.6 285.8,409.4 295.2,403.1C304.6,396.7 313.9,415.5 323.2,421.5C332.6,427.4 341.9,440.9 351.3,438.6C360.6,436.3 370.0,401.5 379.4,407.6C388.7,413.7 398.0,473.3 407.4,475.1C416.8,476.8 426.1,421.7 435.4,418.0C444.8,414.3 454.1,458.2 463.5,452.7C472.9,447.2 482.2,390.3 491.6,385.1C500.9,379.8 510.2,415.6 519.6,421.3C529.0,427.0 538.3,419.4 547.6,419.3C557.0,419.2 566.4,424.4 575.7,420.7C585.1,417.0 594.4,385.4 603.8,397.1C613.1,408.8 622.4,485.8 631.8,491.1C641.1,496.4 650.5,441.1 659.9,428.8C669.2,416.6 678.6,422.6 687.9,417.5C697.3,412.4 706.6,389.4 716.0,398.2C725.3,407.1 734.6,468.3 744.0,470.6C753.4,472.9 762.7,421.3 772.0,411.9C781.4,402.5 790.7,414.5 800.1,414.3C809.4,414.1 818.8,413.8 828.2,410.7C837.5,407.5 846.9,394.4 856.2,395.3C865.6,396.2 874.9,412.8 884.2,416.1C893.6,419.4 902.9,412.2 912.3,414.9C921.6,417.5 931.0,429.3 940.3,432.0C949.7,434.8 959.1,417.3 968.4,431.3C977.8,445.3 987.1,515.6 996.5,515.9C1005.8,516.2 1015.1,444.1 1024.5,433.1C1033.8,422.1 1043.2,439.1 1052.5,449.7C1061.9,460.3 1071.2,493.6 1080.6,496.4C1089.9,499.2 1099.3,483.9 1108.7,466.5C1118.0,449.2 1127.4,411.7 1136.7,392.3C1146.0,373.0 1155.4,346.4 1164.8,350.4C1174.1,354.3 1183.5,399.6 1192.8,416.0C1202.2,432.4 1211.5,449.5 1220.9,448.6C1230.2,447.6 1239.6,426.6 1248.9,410.5C1258.2,394.3 1267.6,352.5 1277.0,351.9C1286.3,351.4 1295.7,391.7 1305.0,407.2C1314.3,422.6 1323.7,437.4 1333.1,444.6C1342.4,451.7 1351.8,461.8 1361.1,449.9C1370.5,438.0 1379.8,376.7 1389.2,373.2C1398.5,369.7 1407.9,419.7 1417.2,428.8C1426.5,437.9 1435.9,436.3 1445.2,427.8C1454.6,419.3 1464.0,393.7 1473.3,378.0C1482.7,362.3 1492.0,331.1 1501.4,333.6C1510.7,336.2 1520.1,372.3 1529.4,393.2C1538.8,414.2 1548.1,456.8 1557.5,459.3C1566.8,461.7 1576.2,424.9 1585.5,407.7C1594.8,390.5 1604.2,346.5 1613.6,355.9C1622.9,365.3 1632.3,466.6 1641.6,464.1C1651.0,461.5 1660.3,360.4 1669.7,340.6C1679.0,320.7 1688.4,347.1 1697.7,345.1C1707.0,343.0 1716.4,317.1 1725.8,328.2C1735.1,339.3 1744.5,396.3 1753.8,411.8C1763.2,427.3 1772.5,427.2 1781.9,421.2C1791.2,415.1 1800.6,389.3 1809.9,375.3C1819.2,361.2 1828.6,343.8 1838.0,336.8C1847.3,329.8 1861.3,333.8 1866.0,333.2" fill="none" stroke="#00ffcc" stroke-width="2.2" clip-path="url(#cpuclip)"/><path d="M154.9,408.2C159.6,410.8 173.7,421.3 183.0,423.6C192.3,425.9 201.7,406.8 211.0,421.9C220.4,436.9 229.8,513.0 239.1,513.9C248.4,514.8 257.8,456.4 267.1,427.2C276.5,398.0 285.8,337.4 295.2,338.9C304.6,340.3 313.9,421.9 323.2,435.8C332.6,449.7 341.9,423.1 351.3,422.1C360.6,421.2 370.0,426.6 379.4,430.0C388.7,433.5 398.0,436.6 407.4,442.8C416.8,448.9 426.1,466.3 435.4,466.8C444.8,467.3 454.1,450.9 463.5,445.9C472.9,440.9 482.2,457.2 491.6,437.0C500.9,416.9 510.2,321.5 519.6,325.1C529.0,328.8 538.3,446.6 547.6,459.1C557.0,471.7 566.4,427.1 575.7,400.4C585.1,373.7 594.4,305.9 603.8,299.0C613.1,292.1 622.4,344.2 631.8,359.2C641.1,374.2 650.5,384.2 659.9,389.2C669.2,394.2 678.6,374.8 687.9,389.1C697.3,403.5 706.6,467.1 716.0,475.3C725.3,483.6 734.6,440.4 744.0,438.7C753.4,437.0 762.7,464.7 772.0,465.1C781.4,465.5 790.7,465.8 800.1,441.2C809.4,416.6 818.8,311.0 828.2,317.4C837.5,323.8 846.9,468.8 856.2,479.4C865.6,490.0 874.9,382.0 884.2,380.9C893.6,379.8 902.9,467.0 912.3,472.7C921.6,478.5 931.0,434.5 940.3,415.6C949.7,396.7 959.1,348.7 968.4,359.3C977.8,369.8 987.1,481.0 996.5,478.9C1005.8,476.7 1015.1,350.4 1024.5,346.3C1033.8,342.3 1043.2,450.5 1052.5,454.5C1061.9,458.6 1071.2,375.4 1080.6,370.8C1089.9,366.2 1099.3,415.9 1108.7,427.1C1118.0,438.3 1127.4,449.4 1136.7,438.2C1146.0,426.9 1155.4,361.9 1164.8,359.6C1174.1,357.3 1183.5,422.0 1192.8,424.4C1202.2,426.7 1211.5,370.8 1220.9,373.7C1230.2,376.5 1239.6,449.2 1248.9,441.6C1258.2,433.9 1267.6,333.5 1277.0,327.8C1286.3,322.0 1295.7,389.2 1305.0,406.9C1314.3,424.6 1323.7,429.7 1333.1,434.0C1342.4,438.2 1351.8,431.5 1361.1,432.4C1370.5,433.4 1379.8,430.1 1389.2,439.7C1398.5,449.4 1407.9,491.1 1417.2,490.4C1426.5,489.7 1435.9,452.1 1445.2,435.4C1454.6,418.7 1464.0,402.5 1473.3,390.2C1482.7,378.0 1492.0,356.1 1501.4,361.7C1510.7,367.4 1520.1,421.9 1529.4,424.1C1538.8,426.3 1548.1,385.6 1557.5,375.1C1566.8,364.5 1576.2,364.1 1585.5,361.0C1594.8,357.8 1604.2,352.4 1613.6,356.3C1622.9,360.2 1632.3,377.1 1641.6,384.4C1651.0,391.6 1660.3,395.3 1669.7,400.0C1679.0,404.7 1688.4,412.5 1697.7,412.6C1707.0,412.7 1716.4,404.7 1725.8,400.4C1735.1,396.2 1744.5,382.7 1753.8,386.8C1763.2,391.0 1772.5,418.7 1781.9,425.5C1791.2,432.4 1800.6,434.7 1809.9,427.7C1819.2,420.7 1828.6,389.6 1838.0,383.5C1847.3,377.3 1861.3,389.6 1866.0,390.9" fill="none" stroke="#ffc896" stroke-width="2.2" clip-path="url(#cpuclip)"/><path d="M154.9,466.7C159.6,462.1 173.7,458.1 183.0,439.2C192.3,420.3 201.7,350.9 211.0,353.2C220.4,355.6 229.8,429.3 239.1,453.6C248.4,477.8 257.8,504.1 267.1,498.9C276.5,493.6 285.8,428.3 295.2,422.0C304.6,415.6 313.9,456.8 323.2,460.8C332.6,464.8 341.9,447.3 351.3,446.0C360.6,444.6 370.0,439.5 379.4,452.6C388.7,465.6 398.0,511.2 407.4,524.2C416.8,537.2 426.1,550.5 435.4,530.8C444.8,511.1 454.1,435.7 463.5,405.9C472.9,376.1 482.2,340.8 491.6,351.9C500.9,363.0 510.2,453.4 519.6,472.5C529.0,491.5 538.3,476.5 547.6,466.3C557.0,456.1 566.4,414.3 575.7,411.4C585.1,408.5 594.4,439.2 603.8,448.9C613.1,458.6 622.4,462.1 631.8,469.7C641.1,477.2 650.5,495.4 659.9,494.1C669.2,492.9 678.6,460.3 687.9,462.1C697.3,463.8 706.6,516.9 716.0,504.7C725.3,492.6 734.6,399.7 744.0,389.2C753.4,378.7 762.7,437.1 772.0,441.8C781.4,446.5 790.7,418.7 800.1,417.5C809.4,416.4 818.8,421.8 828.2,435.1C837.5,448.3 846.9,501.4 856.2,497.1C865.6,492.8 874.9,412.6 884.2,409.3C893.6,405.9 902.9,467.0 912.3,476.9C921.6,486.8 931.0,473.9 940.3,468.6C949.7,463.3 959.1,444.7 968.4,445.1C977.8,445.6 987.1,472.4 996.5,471.1C1005.8,469.8 1015.1,444.7 1024.5,437.3C1033.8,429.9 1043.2,434.2 1052.5,426.7C1061.9,419.2 1071.2,383.4 1080.6,392.2C1089.9,401.0 1099.3,475.6 1108.7,479.6C1118.0,483.7 1127.4,446.6 1136.7,416.5C1146.0,386.4 1155.4,301.8 1164.8,299.0C1174.1,296.2 1183.5,378.6 1192.8,400.0C1202.2,421.4 1211.5,418.8 1220.9,427.4C1230.2,436.0 1239.6,450.1 1248.9,451.5C1258.2,452.9 1267.6,450.8 1277.0,435.8C1286.3,420.8 1295.7,365.3 1305.0,361.6C1314.3,358.0 1323.7,409.5 1333.1,414.0C1342.4,418.5 1351.8,404.3 1361.1,388.8C1370.5,373.2 1379.8,304.0 1389.2,320.5C1398.5,337.0 1407.9,468.6 1417.2,488.0C1426.5,507.3 1435.9,435.3 1445.2,436.6C1454.6,437.8 1464.0,497.0 1473.3,495.5C1482.7,494.0 1492.0,446.4 1501.4,427.7C1510.7,409.0 1520.1,391.4 1529.4,383.1C1538.8,374.7 1548.1,384.8 1557.5,377.4C1566.8,370.0 1576.2,324.8 1585.5,338.5C1594.8,352.2 1604.2,441.0 1613.6,459.6C1622.9,478.3 1632.3,473.6 1641.6,450.4C1651.0,427.1 1660.3,334.9 1669.7,320.0C1679.0,305.2 1688.4,358.7 1697.7,361.1C1707.0,363.5 1716.4,336.3 1725.8,334.2C1735.1,332.0 1744.5,338.6 1753.8,348.2C1763.2,357.8 1772.5,380.8 1781.9,391.6C1791.2,402.5 1800.6,416.0 1809.9,413.3C1819.2,410.5 1828.6,386.0 1838.0,375.2C1847.3,364.4 1861.3,353.1 1866.0,348.6" fill="none" stroke="#339999" stroke-width="2.2" clip-path="url(#cpuclip)"/><line x1="164" y1="299" x2="1855" y2="299" stroke="#a9adab" stroke-width="2"/><line x1="164" y1="679" x2="1855" y2="679" stroke="#a9adab" stroke-width="2"/><line x1="171" y1="299" x2="171" y2="687" stroke="#a9adab" stroke-width="2"/><line x1="1854" y1="299" x2="1854" y2="687" stroke="#a9adab" stroke-width="2"/></svg><div style="position:absolute;left:110.5px;top:298.6px;font-size:17px;line-height:17px;font-weight:400;font-style:normal;color:#1e1e1e;white-space:pre;">100%</div><div style="position:absolute;left:120.0px;top:374.6px;font-size:17px;line-height:17px;font-weight:400;font-style:normal;color:#1e1e1e;white-space:pre;">80%</div><div style="position:absolute;left:120.0px;top:450.6px;font-size:17px;line-height:17px;font-weight:400;font-style:normal;color:#1e1e1e;white-space:pre;">60%</div><div style="position:absolute;left:120.0px;top:526.6px;font-size:17px;line-height:17px;font-weight:400;font-style:normal;color:#1e1e1e;white-space:pre;">40%</div><div style="position:absolute;left:120.0px;top:602.6px;font-size:17px;line-height:17px;font-weight:400;font-style:normal;color:#1e1e1e;white-space:pre;">20%</div><div style="position:absolute;left:129.4px;top:671.6px;font-size:17px;line-height:17px;font-weight:400;font-style:normal;color:#1e1e1e;white-space:pre;">0%</div><div style="position:absolute;left:122.8px;top:691.6px;font-size:17px;line-height:17px;font-weight:400;font-style:normal;color:#1e1e1e;white-space:pre;">60 secondes</div><div style="position:absolute;left:442.0px;top:691.6px;font-size:17px;line-height:17px;font-weight:400;font-style:normal;color:#1e1e1e;white-space:pre;">50</div><div style="position:absolute;left:722.5px;top:691.6px;font-size:17px;line-height:17px;font-weight:400;font-style:normal;color:#1e1e1e;white-space:pre;">40</div><div style="position:absolute;left:1003.0px;top:691.6px;font-size:17px;line-height:17px;font-weight:400;font-style:normal;color:#1e1e1e;white-space:pre;">30</div><div style="position:absolute;left:1283.5px;top:691.6px;font-size:17px;line-height:17px;font-weight:400;font-style:normal;color:#1e1e1e;white-space:pre;">20</div><div style="position:absolute;left:1564.0px;top:691.6px;font-size:17px;line-height:17px;font-weight:400;font-style:normal;color:#1e1e1e;white-space:pre;">10</div><div style="position:absolute;left:1849.3px;top:691.6px;font-size:17px;line-height:17px;font-weight:400;font-style:normal;color:#1e1e1e;white-space:pre;">0</div><div style="position:absolute;left:61.0px;top:237.8px;font-size:38px;line-height:38px;font-weight:700;font-style:normal;color:#1e1e1e;white-space:pre;transform:scaleX(0.9571);transform-origin:0 0;">Historique d'utilisation du CPU</div><div style="position:absolute;left:172px;top:730px;width:64px;height:45px;background:#ff6a00;border:2px solid #722f00;box-shadow:inset 0 0 0 1.5px #ffb47f;box-sizing:border-box"></div><div style="position:absolute;left:249.0px;top:733.8px;font-size:38px;line-height:38px;font-weight:400;font-style:normal;color:#1e1e1e;white-space:pre;transform:scaleX(0.9620);transform-origin:0 0;">CPU1 76,0%</div><div style="position:absolute;left:598px;top:730px;width:64px;height:45px;background:#c8102e;border:2px solid #5a0714;box-shadow:inset 0 0 0 1.5px #e38796;box-sizing:border-box"></div><div style="position:absolute;left:675.0px;top:733.8px;font-size:38px;line-height:38px;font-weight:400;font-style:normal;color:#1e1e1e;white-space:pre;transform:scaleX(0.9620);transform-origin:0 0;">CPU2 90,1%</div><div style="position:absolute;left:1024px;top:730px;width:64px;height:45px;background:#4ea93b;border:2px solid #234c1a;box-shadow:inset 0 0 0 1.5px #a6d49d;box-sizing:border-box"></div><div style="position:absolute;left:1101.0px;top:733.8px;font-size:38px;line-height:38px;font-weight:400;font-style:normal;color:#1e1e1e;white-space:pre;transform:scaleX(0.9620);transform-origin:0 0;">CPU3 74,3%</div><div style="position:absolute;left:1450px;top:730px;width:64px;height:45px;background:#2f7fb8;border:2px solid #153952;box-shadow:inset 0 0 0 1.5px #97bfdb;box-sizing:border-box"></div><div style="position:absolute;left:1527.0px;top:733.8px;font-size:38px;line-height:38px;font-weight:400;font-style:normal;color:#1e1e1e;white-space:pre;transform:scaleX(0.9620);transform-origin:0 0;">CPU4 75,0%</div><div style="position:absolute;left:172px;top:786px;width:64px;height:45px;background:#ff6600;border:2px solid #722d00;box-shadow:inset 0 0 0 1.5px #ffb27f;box-sizing:border-box"></div><div style="position:absolute;left:249.0px;top:789.8px;font-size:38px;line-height:38px;font-weight:400;font-style:normal;color:#1e1e1e;white-space:pre;transform:scaleX(0.9620);transform-origin:0 0;">CPU5 83,7%</div><div style="position:absolute;left:598px;top:786px;width:64px;height:45px;background:#6a00cc;border:2px solid #2f005b;box-shadow:inset 0 0 0 1.5px #b47fe5;box-sizing:border-box"></div><div style="position:absolute;left:675.0px;top:789.8px;font-size:38px;line-height:38px;font-weight:400;font-style:normal;color:#1e1e1e;white-space:pre;transform:scaleX(0.9620);transform-origin:0 0;">CPU6 87,9%</div><div style="position:absolute;left:1024px;top:786px;width:64px;height:45px;background:#990000;border:2px solid #440000;box-shadow:inset 0 0 0 1.5px #cc7f7f;box-sizing:border-box"></div><div style="position:absolute;left:1101.0px;top:789.8px;font-size:38px;line-height:38px;font-weight:400;font-style:normal;color:#1e1e1e;white-space:pre;transform:scaleX(0.9620);transform-origin:0 0;">CPU7 70,6%</div><div style="position:absolute;left:1450px;top:786px;width:64px;height:45px;background:#000099;border:2px solid #000044;box-shadow:inset 0 0 0 1.5px #7f7fcc;box-sizing:border-box"></div><div style="position:absolute;left:1527.0px;top:789.8px;font-size:38px;line-height:38px;font-weight:400;font-style:normal;color:#1e1e1e;white-space:pre;transform:scaleX(0.9620);transform-origin:0 0;">CPU8 86,0%</div><div style="position:absolute;left:172px;top:842px;width:64px;height:45px;background:#ffcc00;border:2px solid #725b00;box-shadow:inset 0 0 0 1.5px #ffe57f;box-sizing:border-box"></div><div style="position:absolute;left:249.0px;top:845.8px;font-size:38px;line-height:38px;font-weight:400;font-style:normal;color:#1e1e1e;white-space:pre;transform:scaleX(0.9620);transform-origin:0 0;">CPU9 78,6%</div><div style="position:absolute;left:598px;top:842px;width:64px;height:45px;background:#009900;border:2px solid #004400;box-shadow:inset 0 0 0 1.5px #7fcc7f;box-sizing:border-box"></div><div style="position:absolute;left:675.0px;top:845.8px;font-size:38px;line-height:38px;font-weight:400;font-style:normal;color:#1e1e1e;white-space:pre;transform:scaleX(0.9620);transform-origin:0 0;">CPU10 81,4%</div><div style="position:absolute;left:1024px;top:842px;width:64px;height:45px;background:#cc6600;border:2px solid #5b2d00;box-shadow:inset 0 0 0 1.5px #e5b27f;box-sizing:border-box"></div><div style="position:absolute;left:1101.0px;top:845.8px;font-size:38px;line-height:38px;font-weight:400;font-style:normal;color:#1e1e1e;white-space:pre;transform:scaleX(0.9620);transform-origin:0 0;">CPU11 68,0%</div><div style="position:absolute;left:1450px;top:842px;width:64px;height:45px;background:#330099;border:2px solid #160044;box-shadow:inset 0 0 0 1.5px #997fcc;box-sizing:border-box"></div><div style="position:absolute;left:1527.0px;top:845.8px;font-size:38px;line-height:38px;font-weight:400;font-style:normal;color:#1e1e1e;white-space:pre;transform:scaleX(0.9620);transform-origin:0 0;">CPU12 85,6%</div><div style="position:absolute;left:172px;top:897px;width:64px;height:45px;background:#cc0066;border:2px solid #5b002d;box-shadow:inset 0 0 0 1.5px #e57fb2;box-sizing:border-box"></div><div style="position:absolute;left:249.0px;top:900.8px;font-size:38px;line-height:38px;font-weight:400;font-style:normal;color:#1e1e1e;white-space:pre;transform:scaleX(0.9620);transform-origin:0 0;">CPU13 76,8%</div><div style="position:absolute;left:598px;top:897px;width:64px;height:45px;background:#00ffcc;border:2px solid #00725b;box-shadow:inset 0 0 0 1.5px #7fffe5;box-sizing:border-box"></div><div style="position:absolute;left:675.0px;top:900.8px;font-size:38px;line-height:38px;font-weight:400;font-style:normal;color:#1e1e1e;white-space:pre;transform:scaleX(0.9620);transform-origin:0 0;">CPU14 65,7%</div><div style="position:absolute;left:1024px;top:897px;width:64px;height:45px;background:#ffc896;border:2px solid #725a43;box-shadow:inset 0 0 0 1.5px #ffe3ca;box-sizing:border-box"></div><div style="position:absolute;left:1101.0px;top:900.8px;font-size:38px;line-height:38px;font-weight:400;font-style:normal;color:#1e1e1e;white-space:pre;transform:scaleX(0.9620);transform-origin:0 0;">CPU15 86,0%</div><div style="position:absolute;left:1450px;top:897px;width:64px;height:45px;background:#339999;border:2px solid #164444;box-shadow:inset 0 0 0 1.5px #99cccc;box-sizing:border-box"></div><div style="position:absolute;left:1527.0px;top:900.8px;font-size:38px;line-height:38px;font-weight:400;font-style:normal;color:#1e1e1e;white-space:pre;transform:scaleX(0.9620);transform-origin:0 0;">CPU16 74,3%</div><svg style="position:absolute;left:0;top:0" width="1920" height="2400"><line x1="451.5" y1="1043" x2="451.5" y2="1431" stroke="#dcdcdc" stroke-width="2"/><line x1="732.0" y1="1043" x2="732.0" y2="1431" stroke="#dcdcdc" stroke-width="2"/><line x1="1012.5" y1="1043" x2="1012.5" y2="1431" stroke="#dcdcdc" stroke-width="2"/><line x1="1293.0" y1="1043" x2="1293.0" y2="1431" stroke="#dcdcdc" stroke-width="2"/><line x1="1573.5" y1="1043" x2="1573.5" y2="1431" stroke="#dcdcdc" stroke-width="2"/><line x1="164" y1="1119" x2="1854" y2="1119" stroke="#dcdcdc" stroke-width="2"/><line x1="164" y1="1195" x2="1854" y2="1195" stroke="#dcdcdc" stroke-width="2"/><line x1="164" y1="1271" x2="1854" y2="1271" stroke="#dcdcdc" stroke-width="2"/><line x1="164" y1="1347" x2="1854" y2="1347" stroke="#dcdcdc" stroke-width="2"/><path d="M171.0,1149.4C175.7,1149.3 189.7,1149.1 199.1,1149.0C208.4,1148.9 217.8,1148.7 227.1,1148.6C236.4,1148.6 245.8,1148.6 255.2,1148.6C264.5,1148.7 273.8,1149.0 283.2,1149.0C292.6,1149.1 301.9,1149.0 311.2,1149.0C320.6,1149.0 329.9,1149.1 339.3,1149.0C348.7,1149.0 358.0,1148.9 367.4,1148.8C376.7,1148.8 386.0,1148.7 395.4,1148.6C404.8,1148.6 414.1,1148.6 423.4,1148.6C432.8,1148.6 442.1,1148.6 451.5,1148.6C460.9,1148.6 470.2,1148.7 479.6,1148.6C488.9,1148.6 498.2,1148.5 507.6,1148.5C517.0,1148.4 526.3,1148.4 535.6,1148.5C545.0,1148.5 554.4,1148.6 563.7,1148.6C573.1,1148.7 582.4,1148.6 591.8,1148.6C601.1,1148.6 610.4,1148.7 619.8,1148.6C629.1,1148.6 638.5,1148.5 647.9,1148.5C657.2,1148.4 666.5,1148.2 675.9,1148.3C685.2,1148.3 694.6,1148.6 704.0,1148.6C713.3,1148.7 722.6,1148.7 732.0,1148.6C741.4,1148.6 750.7,1148.5 760.0,1148.5C769.4,1148.4 778.8,1148.4 788.1,1148.3C797.5,1148.2 806.8,1147.9 816.1,1147.9C825.5,1147.9 834.9,1148.1 844.2,1148.3C853.6,1148.4 862.9,1148.6 872.2,1148.6C881.6,1148.7 890.9,1148.7 900.3,1148.6C909.6,1148.6 919.0,1148.3 928.4,1148.3C937.7,1148.2 947.0,1148.3 956.4,1148.3C965.8,1148.3 975.1,1148.3 984.5,1148.3C993.8,1148.3 1003.1,1148.3 1012.5,1148.3C1021.9,1148.3 1031.2,1148.3 1040.5,1148.3C1049.9,1148.3 1059.2,1148.3 1068.6,1148.3C1077.9,1148.3 1087.3,1148.3 1096.7,1148.3C1106.0,1148.3 1115.4,1148.3 1124.7,1148.3C1134.0,1148.3 1143.4,1148.3 1152.8,1148.3C1162.1,1148.3 1171.5,1148.3 1180.8,1148.3C1190.1,1148.3 1199.5,1148.3 1208.8,1148.3C1218.2,1148.2 1227.6,1147.9 1236.9,1147.9C1246.2,1147.9 1255.6,1148.3 1265.0,1148.3C1274.3,1148.3 1283.7,1148.3 1293.0,1147.9C1302.3,1147.4 1311.7,1145.7 1321.0,1145.6C1330.4,1145.5 1339.8,1146.7 1349.1,1147.1C1358.4,1147.6 1367.8,1148.0 1377.2,1148.3C1386.5,1148.5 1395.9,1148.8 1405.2,1148.6C1414.5,1148.5 1423.9,1147.7 1433.2,1147.5C1442.6,1147.3 1452.0,1147.5 1461.3,1147.5C1470.6,1147.5 1480.0,1147.4 1489.3,1147.5C1498.7,1147.6 1508.1,1147.8 1517.4,1147.9C1526.8,1148.0 1536.1,1148.2 1545.5,1148.3C1554.8,1148.3 1564.2,1148.3 1573.5,1148.3C1582.8,1148.3 1592.2,1148.3 1601.5,1148.3C1610.9,1148.3 1620.2,1148.3 1629.6,1148.3C1638.9,1148.3 1648.3,1148.3 1657.7,1148.3C1667.0,1148.2 1676.4,1147.9 1685.7,1147.9C1695.0,1147.8 1704.4,1147.9 1713.8,1147.9C1723.1,1147.9 1732.5,1147.9 1741.8,1147.9C1751.1,1147.9 1760.5,1147.9 1769.8,1147.9C1779.2,1147.8 1788.6,1147.6 1797.9,1147.5C1807.2,1147.4 1816.6,1147.6 1826.0,1147.5C1835.3,1147.4 1849.3,1147.2 1854.0,1147.1" fill="none" stroke="#ab1650" stroke-width="2"/><path d="M171.0,1393.7C196.2,1393.7 221.5,1393.7 246.7,1393.7C262.6,1393.7 278.5,1387.7 294.4,1387.7C383.2,1387.7 472.1,1387.7 560.9,1387.7C567.4,1387.7 574.0,1383.9 580.5,1383.9C778.7,1383.9 977.0,1383.9 1175.2,1383.9C1182.7,1383.9 1190.1,1382.7 1197.6,1382.7C1225.7,1382.7 1253.7,1382.7 1281.8,1382.7C1291.1,1382.7 1300.5,1377.4 1309.8,1377.4C1339.8,1377.4 1369.7,1377.4 1399.6,1377.4C1407.1,1377.4 1414.6,1375.9 1422.0,1375.9C1444.5,1375.9 1466.9,1375.9 1489.3,1375.9C1497.8,1375.9 1506.2,1370.6 1514.6,1370.6C1602.5,1370.6 1690.4,1370.6 1778.3,1370.6C1786.7,1370.6 1795.1,1367.9 1803.5,1367.9C1820.3,1367.9 1837.2,1367.9 1854.0,1367.9" fill="none" stroke="#4ea93b" stroke-width="2"/><line x1="164" y1="1043" x2="1855" y2="1043" stroke="#a9adab" stroke-width="2"/><line x1="164" y1="1423" x2="1855" y2="1423" stroke="#a9adab" stroke-width="2"/><line x1="171" y1="1043" x2="171" y2="1431" stroke="#a9adab" stroke-width="2"/><line x1="1854" y1="1043" x2="1854" y2="1431" stroke="#a9adab" stroke-width="2"/></svg><div style="position:absolute;left:110.5px;top:1042.6px;font-size:17px;line-height:17px;font-weight:400;font-style:normal;color:#1e1e1e;white-space:pre;">100%</div><div style="position:absolute;left:120.0px;top:1118.6px;font-size:17px;line-height:17px;font-weight:400;font-style:normal;color:#1e1e1e;white-space:pre;">80%</div><div style="position:absolute;left:120.0px;top:1194.6px;font-size:17px;line-height:17px;font-weight:400;font-style:normal;color:#1e1e1e;white-space:pre;">60%</div><div style="position:absolute;left:120.0px;top:1270.6px;font-size:17px;line-height:17px;font-weight:400;font-style:normal;color:#1e1e1e;white-space:pre;">40%</div><div style="position:absolute;left:120.0px;top:1346.6px;font-size:17px;line-height:17px;font-weight:400;font-style:normal;color:#1e1e1e;white-space:pre;">20%</div><div style="position:absolute;left:129.4px;top:1415.6px;font-size:17px;line-height:17px;font-weight:400;font-style:normal;color:#1e1e1e;white-space:pre;">0%</div><div style="position:absolute;left:122.8px;top:1435.6px;font-size:17px;line-height:17px;font-weight:400;font-style:normal;color:#1e1e1e;white-space:pre;">60 secondes</div><div style="position:absolute;left:442.0px;top:1435.6px;font-size:17px;line-height:17px;font-weight:400;font-style:normal;color:#1e1e1e;white-space:pre;">50</div><div style="position:absolute;left:722.5px;top:1435.6px;font-size:17px;line-height:17px;font-weight:400;font-style:normal;color:#1e1e1e;white-space:pre;">40</div><div style="position:absolute;left:1003.0px;top:1435.6px;font-size:17px;line-height:17px;font-weight:400;font-style:normal;color:#1e1e1e;white-space:pre;">30</div><div style="position:absolute;left:1283.5px;top:1435.6px;font-size:17px;line-height:17px;font-weight:400;font-style:normal;color:#1e1e1e;white-space:pre;">20</div><div style="position:absolute;left:1564.0px;top:1435.6px;font-size:17px;line-height:17px;font-weight:400;font-style:normal;color:#1e1e1e;white-space:pre;">10</div><div style="position:absolute;left:1849.3px;top:1435.6px;font-size:17px;line-height:17px;font-weight:400;font-style:normal;color:#1e1e1e;white-space:pre;">0</div><div style="position:absolute;left:61.0px;top:982.8px;font-size:38px;line-height:38px;font-weight:700;font-style:normal;color:#1e1e1e;white-space:pre;transform:scaleX(0.9620);transform-origin:0 0;">Historique d'utilisation de la mémoire physique et du fichier d'échange</div><svg style="position:absolute;left:166px;top:1492px" width="66" height="66" viewBox="0 0 66 66"><circle cx="33" cy="33" r="30" fill="#fff" stroke="#bdbdbd" stroke-width="2"/><path d="M33,4 A29,29 0 1 1 4,38 L24,35 A9,9 0 0 1 33,24 Z" fill="#ab1650" stroke="#1a1a1a" stroke-width="2"/><path d="M35,7 A26,26 0 1 1 7,40" fill="none" stroke="#e07aa0" stroke-width="1.5"/></svg><div style="position:absolute;left:244.0px;top:1477.8px;font-size:38px;line-height:38px;font-weight:400;font-style:normal;color:#1e1e1e;white-space:pre;transform:scaleX(0.9945);transform-origin:0 0;">Mémoire</div><div style="position:absolute;left:244.0px;top:1533.8px;font-size:38px;line-height:38px;font-weight:400;font-style:normal;color:#1e1e1e;white-space:pre;transform:scaleX(0.9607);transform-origin:0 0;">10,9 GiB (72,2%) de 15,0 GiB</div><svg style="position:absolute;left:1022px;top:1492px" width="66" height="66" viewBox="0 0 66 66"><circle cx="33" cy="33" r="29" fill="#fff" stroke="#c8c8c8" stroke-width="2"/><path d="M33,33 L33,6 A27,27 0 0 1 49,11 Z" fill="#4ea93b" stroke="#1a1a1a" stroke-width="2"/><circle cx="33" cy="33" r="8" fill="#4ea93b" stroke="#1a1a1a" stroke-width="2"/></svg><div style="position:absolute;left:1098.0px;top:1477.8px;font-size:38px;line-height:38px;font-weight:400;font-style:normal;color:#1e1e1e;white-space:pre;transform:scaleX(0.9573);transform-origin:0 0;">Swap</div><div style="position:absolute;left:1098.0px;top:1533.8px;font-size:38px;line-height:38px;font-weight:400;font-style:normal;color:#1e1e1e;white-space:pre;transform:scaleX(0.9726);transform-origin:0 0;">266,0 MiB (13,9%) de 1,9 GiB</div><svg style="position:absolute;left:0;top:0" width="1920" height="2400"><line x1="451.5" y1="1674" x2="451.5" y2="2062" stroke="#dcdcdc" stroke-width="2"/><line x1="732.0" y1="1674" x2="732.0" y2="2062" stroke="#dcdcdc" stroke-width="2"/><line x1="1012.5" y1="1674" x2="1012.5" y2="2062" stroke="#dcdcdc" stroke-width="2"/><line x1="1293.0" y1="1674" x2="1293.0" y2="2062" stroke="#dcdcdc" stroke-width="2"/><line x1="1573.5" y1="1674" x2="1573.5" y2="2062" stroke="#dcdcdc" stroke-width="2"/><line x1="164" y1="1750" x2="1854" y2="1750" stroke="#dcdcdc" stroke-width="2"/><line x1="164" y1="1826" x2="1854" y2="1826" stroke="#dcdcdc" stroke-width="2"/><line x1="164" y1="1902" x2="1854" y2="1902" stroke="#dcdcdc" stroke-width="2"/><line x1="164" y1="1978" x2="1854" y2="1978" stroke="#dcdcdc" stroke-width="2"/><defs><clipPath id="netclip"><rect x="171" y="1674" width="1683" height="379"/></clipPath></defs><path d="M171.0,2049.5C185.0,2049.1 199.0,2048.3 213.1,2048.3C222.4,2048.3 231.8,2050.8 241.1,2050.8C269.2,2050.8 297.2,2048.9 325.3,2048.9C334.6,2048.9 344.0,2051.4 353.3,2051.4C382.3,2051.4 411.3,2051.4 440.3,2051.4C449.6,2051.4 459.0,2035.3 468.3,2035.3C477.7,2035.3 487.0,2051.4 496.4,2051.4C506.7,2051.4 516.9,2051.4 527.2,2051.4C536.6,2051.4 545.9,2034.7 555.3,2034.7C564.6,2034.7 574.0,2038.4 583.3,2039.6C588.0,2040.2 592.7,2039.8 597.4,2040.9C602.0,2041.9 606.7,2045.8 611.4,2045.8C620.7,2045.8 630.1,2044.6 639.4,2044.6C648.8,2044.6 658.1,2052.0 667.5,2052.0C733.9,2052.0 800.3,2052.0 866.6,2052.0C876.0,2052.0 885.3,2039.6 894.7,2039.6C904.0,2039.6 913.4,2052.0 922.7,2052.0C958.3,2052.0 993.8,2052.0 1029.3,2052.0C1038.7,2052.0 1048.0,2043.7 1057.4,2042.1C1061.1,2041.5 1064.9,2042.0 1068.6,2039.6C1077.0,2034.2 1085.4,1999.7 1093.8,1990.1C1096.7,1986.9 1099.5,1989.2 1102.3,1983.9C1109.1,1971.0 1115.9,1907.2 1122.7,1907.2C1132.1,1907.2 1141.4,2041.8 1150.8,2048.3C1156.1,2052.0 1161.4,2052.0 1166.8,2052.0C1171.2,2052.0 1175.6,2052.0 1180.0,2052.0C1189.3,2052.0 1198.7,2037.1 1208.0,2037.1C1217.4,2037.1 1226.7,2052.0 1236.1,2052.0C1274.7,2052.0 1313.3,2052.0 1351.9,2050.8C1361.3,2050.5 1370.6,2043.3 1380.0,2043.3C1389.3,2043.3 1398.7,2051.2 1408.0,2051.4C1436.5,2052.0 1465.0,2052.0 1493.6,2052.0C1502.9,2052.0 1512.3,2038.4 1521.6,2038.4C1531.0,2038.4 1540.3,2051.4 1549.7,2051.4C1568.8,2051.4 1588.0,2051.4 1607.2,2051.4C1616.5,2051.4 1625.9,2046.4 1635.2,2046.4C1644.6,2046.4 1653.9,2052.0 1663.3,2052.0C1682.9,2052.0 1702.5,2052.0 1722.2,2052.0C1731.5,2052.0 1740.9,2001.3 1750.2,2001.3C1759.6,2001.3 1768.9,2051.4 1778.3,2051.4C1787.6,2051.4 1797.0,2039.6 1806.3,2039.6C1815.7,2039.6 1825.0,2050.5 1834.4,2051.4C1840.9,2052.0 1847.5,2051.9 1854.0,2052.0" fill="none" stroke="#2f7fb8" stroke-width="2.2" clip-path="url(#netclip)"/><path d="M171.0,2048.3C180.3,2048.3 189.7,2048.3 199.1,2048.3C208.4,2048.3 217.8,2050.8 227.1,2050.8C231.8,2050.8 236.4,2048.3 241.1,2048.3C250.5,2048.3 259.8,2051.4 269.2,2051.4C278.5,2051.4 287.9,2051.4 297.2,2051.4C306.6,2051.4 315.9,2047.7 325.3,2047.7C334.6,2047.7 344.0,2051.4 353.3,2051.4C382.3,2051.4 411.3,2051.4 440.3,2051.4C449.6,2051.4 459.0,1982.7 468.3,1982.7C477.7,1982.7 487.0,2051.4 496.4,2051.4C506.7,2051.4 516.9,2051.4 527.2,2051.4C536.6,2051.4 545.9,2035.9 555.3,2035.9C564.6,2035.9 574.0,2042.0 583.3,2043.3C588.0,2044.0 592.7,2043.5 597.4,2044.6C602.0,2045.6 606.7,2050.8 611.4,2050.8C620.7,2050.8 630.1,2045.8 639.4,2045.8C648.8,2045.8 658.1,2052.0 667.5,2052.0C696.5,2052.0 725.5,2052.0 754.4,2052.0C763.8,2052.0 773.1,2048.9 782.5,2048.9C791.8,2048.9 801.2,2052.0 810.5,2052.0C829.2,2052.0 847.9,2052.0 866.6,2052.0C876.0,2052.0 885.3,1988.9 894.7,1988.9C904.0,1988.9 913.4,2052.0 922.7,2052.0C958.3,2052.0 993.8,2052.0 1029.3,2052.0C1038.7,2052.0 1048.0,2045.3 1057.4,2044.6C1061.1,2044.3 1064.9,2044.6 1068.6,2040.9C1077.0,2032.5 1085.4,1877.7 1093.8,1849.0C1096.7,1839.4 1099.5,1843.6 1102.3,1837.9C1109.1,1824.0 1115.9,1756.2 1122.7,1756.2C1132.1,1756.2 1141.4,2052.0 1150.8,2052.0C1159.9,2052.0 1168.9,2048.3 1178.0,2048.3C1178.9,2048.3 1179.9,2048.3 1180.8,2048.3C1189.9,2048.3 1198.9,1986.4 1208.0,1986.4C1217.4,1986.4 1226.7,2052.0 1236.1,2052.0C1274.7,2052.0 1313.3,2052.0 1351.9,2050.8C1361.3,2050.5 1370.6,2043.3 1380.0,2043.3C1389.3,2043.3 1398.7,2051.2 1408.0,2051.4C1436.5,2052.0 1465.0,2052.0 1493.6,2052.0C1502.9,2052.0 1512.3,1992.0 1521.6,1992.0C1531.0,1992.0 1540.3,2051.4 1549.7,2051.4C1557.6,2051.4 1565.6,2050.1 1573.5,2050.1C1582.8,2050.1 1592.2,2051.2 1601.5,2051.4C1641.8,2052.0 1682.0,2052.0 1722.2,2052.0C1731.5,2052.0 1740.9,1997.5 1750.2,1997.5C1759.6,1997.5 1768.9,2052.0 1778.3,2052.0C1787.6,2052.0 1797.0,2002.5 1806.3,2002.5C1814.7,2002.5 1823.1,2052.0 1831.6,2052.0C1839.0,2052.0 1846.5,2044.6 1854.0,2040.9" fill="none" stroke="#e8200c" stroke-width="2.2" clip-path="url(#netclip)"/><line x1="164" y1="1674" x2="1855" y2="1674" stroke="#a9adab" stroke-width="2"/><line x1="164" y1="2054" x2="1855" y2="2054" stroke="#a9adab" stroke-width="2"/><line x1="171" y1="1674" x2="171" y2="2062" stroke="#a9adab" stroke-width="2"/><line x1="1854" y1="1674" x2="1854" y2="2062" stroke="#a9adab" stroke-width="2"/></svg><div style="position:absolute;left:96.3px;top:1673.6px;font-size:17px;line-height:17px;font-weight:400;font-style:normal;color:#1e1e1e;white-space:pre;">30,7 kB</div><div style="position:absolute;left:96.3px;top:1749.6px;font-size:17px;line-height:17px;font-weight:400;font-style:normal;color:#1e1e1e;white-space:pre;">24,6 kB</div><div style="position:absolute;left:96.3px;top:1825.6px;font-size:17px;line-height:17px;font-weight:400;font-style:normal;color:#1e1e1e;white-space:pre;">18,4 kB</div><div style="position:absolute;left:96.3px;top:1901.6px;font-size:17px;line-height:17px;font-weight:400;font-style:normal;color:#1e1e1e;white-space:pre;">12,3 kB</div><div style="position:absolute;left:105.8px;top:1977.6px;font-size:17px;line-height:17px;font-weight:400;font-style:normal;color:#1e1e1e;white-space:pre;">6,1 kB</div><div style="position:absolute;left:103.0px;top:2046.6px;font-size:17px;line-height:17px;font-weight:400;font-style:normal;color:#1e1e1e;white-space:pre;">0 octet</div><div style="position:absolute;left:122.8px;top:2066.6px;font-size:17px;line-height:17px;font-weight:400;font-style:normal;color:#1e1e1e;white-space:pre;">60 secondes</div><div style="position:absolute;left:442.0px;top:2066.6px;font-size:17px;line-height:17px;font-weight:400;font-style:normal;color:#1e1e1e;white-space:pre;">50</div><div style="position:absolute;left:722.5px;top:2066.6px;font-size:17px;line-height:17px;font-weight:400;font-style:normal;color:#1e1e1e;white-space:pre;">40</div><div style="position:absolute;left:1003.0px;top:2066.6px;font-size:17px;line-height:17px;font-weight:400;font-style:normal;color:#1e1e1e;white-space:pre;">30</div><div style="position:absolute;left:1283.5px;top:2066.6px;font-size:17px;line-height:17px;font-weight:400;font-style:normal;color:#1e1e1e;white-space:pre;">20</div><div style="position:absolute;left:1564.0px;top:2066.6px;font-size:17px;line-height:17px;font-weight:400;font-style:normal;color:#1e1e1e;white-space:pre;">10</div><div style="position:absolute;left:1849.3px;top:2066.6px;font-size:17px;line-height:17px;font-weight:400;font-style:normal;color:#1e1e1e;white-space:pre;">0</div><div style="position:absolute;left:61.0px;top:1613.8px;font-size:38px;line-height:38px;font-weight:700;font-style:normal;color:#1e1e1e;white-space:pre;transform:scaleX(0.9658);transform-origin:0 0;">Historique du trafic réseau</div><svg style="position:absolute;left:168px;top:2106px" width="62" height="62" viewBox="0 0 62 62"><defs><linearGradient id="ga" x1="0" y1="0" x2="1" y2="1"><stop offset="0" stop-color="#80b4dc"/><stop offset=".5" stop-color="#3a80b8"/><stop offset="1" stop-color="#2f7ab4"/></linearGradient><radialGradient id="sh"><stop offset="0" stop-color="#000" stop-opacity=".35"/><stop offset="1" stop-color="#000" stop-opacity="0"/></radialGradient></defs><ellipse cx="31" cy="57" rx="28" ry="4" fill="url(#sh)"/><path d="M14,2 H46 V22.4 H58.8 L30,55.4 L1.3,22.4 H14 Z" fill="url(#ga)" stroke="#0e3a5c" stroke-width="2.2"/><path d="M17,5 H43 V25.4 H52.5 L30,51 L7.5,25.4 H17 Z" fill="none" stroke="#a8cce8" stroke-width="1.8"/></svg><svg style="position:absolute;left:1005px;top:2106px" width="62" height="62" viewBox="0 0 62 62"><defs><linearGradient id="gr" x1="0" y1="0" x2="1" y2="1"><stop offset="0" stop-color="#ff6a50"/><stop offset="1" stop-color="#d81800"/></linearGradient></defs><ellipse cx="31" cy="57" rx="28" ry="4" fill="url(#sh)"/><path d="M30.4,2.4 L59,35.7 H46.3 V55.6 H15.3 V35.7 H2.6 Z" fill="url(#gr)" stroke="#6a0c00" stroke-width="2.2"/><path d="M30.4,7 L52.5,32.7 H43.3 V52.6 H18.3 V32.7 H8.5 Z" fill="none" stroke="#ff9a80" stroke-width="1.8"/></svg><div style="position:absolute;left:243.0px;top:2109.8px;font-size:38px;line-height:38px;font-weight:400;font-style:normal;color:#1e1e1e;white-space:pre;">Réception</div><div style="position:absolute;left:243.0px;top:2165.8px;font-size:38px;line-height:38px;font-weight:400;font-style:normal;color:#1e1e1e;white-space:pre;transform:scaleX(1.0137);transform-origin:0 0;">Total reçu</div><div style="position:absolute;left:686.5px;top:2109.8px;font-size:38px;line-height:38px;font-weight:400;font-style:normal;color:#1e1e1e;white-space:pre;transform:scaleX(1.0175);transform-origin:0 0;">888 octets/s</div><div style="position:absolute;left:734.0px;top:2165.8px;font-size:38px;line-height:38px;font-weight:400;font-style:normal;color:#1e1e1e;white-space:pre;transform:scaleX(0.9898);transform-origin:0 0;">801,9 MB</div><div style="position:absolute;left:1081.0px;top:2109.8px;font-size:38px;line-height:38px;font-weight:400;font-style:normal;color:#1e1e1e;white-space:pre;transform:scaleX(0.9362);transform-origin:0 0;">Envoi</div><div style="position:absolute;left:1081.0px;top:2165.8px;font-size:38px;line-height:38px;font-weight:400;font-style:normal;color:#1e1e1e;white-space:pre;transform:scaleX(0.9936);transform-origin:0 0;">Total envoyé</div><div style="position:absolute;left:1565.0px;top:2109.8px;font-size:38px;line-height:38px;font-weight:400;font-style:normal;color:#1e1e1e;white-space:pre;transform:scaleX(1.0151);transform-origin:0 0;">454 octets/s</div><div style="position:absolute;left:1635.0px;top:2165.8px;font-size:38px;line-height:38px;font-weight:400;font-style:normal;color:#1e1e1e;white-space:pre;transform:scaleX(0.9750);transform-origin:0 0;">43,5 MB</div><div style="position:absolute;left:0px;top:2346px;width:3840px;height:54px;background:#545550;"></div><svg style="position:absolute;left:21px;top:2349px" width="46" height="46" viewBox="0 0 46 46"><circle cx="23" cy="23" r="20" fill="none" stroke="#dcdcdc" stroke-width="3.6"/><path d="M13,11 V26 A5,5 0 0 0 18,31 H28 A5,5 0 0 0 33,26 V18 A3.25,3.25 0 0 0 26.5,18 V27 M26.5,18 A3.5,3.5 0 0 0 19.5,18 V27" fill="none" stroke="#dcdcdc" stroke-width="3.4"/></svg><div style="position:absolute;left:77px;top:2356px;width:46px;height:34px;background:#5cc5ad;"></div><div style="position:absolute;left:77px;top:2356px;width:46px;height:6px;background:#47998a;"></div><div style="position:absolute;left:81px;top:2358px;width:3px;height:3px;background:#ffffff;"></div><div style="position:absolute;left:127px;top:2358px;width:46px;height:32px;background:#5cc5ad;"></div><div style="position:absolute;left:131px;top:2353px;width:40px;height:6px;background:#f0f0f0;border-radius:3px 3px 0 0"></div><div style="position:absolute;left:140px;top:2352px;width:14px;height:3px;background:#f0f0f0;"></div><div style="position:absolute;left:183px;top:2351px;width:42px;height:41px;background:linear-gradient(#3a3a3a,#1e1e1e);border-radius:7px;border:1px solid #111;box-sizing:border-box;overflow:hidden"><div style="color:#f0f0f0;font:bold 17px 'Liberation Mono';position:absolute;left:5px;top:4px">$_</div></div><div style="position:absolute;left:237px;top:2351px;width:42px;height:41px;background:#f26f3a;border-radius:7px;border:none;box-sizing:border-box;overflow:hidden"><svg width="42" height="41"><circle cx="21" cy="22" r="13" fill="#ffffff"/><circle cx="23" cy="23" r="7" fill="#f26f3a"/><path d="M12,12 Q22,4 30,12" fill="none" stroke="#fff" stroke-width="4"/></svg></div><div style="position:absolute;left:321px;top:2351px;width:41px;height:41px;background:linear-gradient(#c01010,#8a0000);border-radius:7px;border:none;box-sizing:border-box;overflow:hidden"><div style="color:#fff;font:italic bold 26px 'Liberation Sans';position:absolute;left:5px;top:5px;letter-spacing:-2px">Fz</div></div><div style="position:absolute;left:375px;top:2351px;width:41px;height:41px;background:linear-gradient(#5d8fd8,#3d5aa8);border-radius:7px;border:none;box-sizing:border-box;overflow:hidden"><div style="position:absolute;left:6px;top:9px;width:29px;height:22px;background:#f0f0e8;border-radius:2px"></div><svg style="position:absolute;left:6px;top:9px" width="29" height="22"><path d="M1,1 L14.5,13 L28,1 M1,21 L11,11 M28,21 L18,11" fill="none" stroke="#b8b8b0" stroke-width="1.2"/></svg></div><div style="position:absolute;left:430px;top:2351px;width:40px;height:41px;background:#9a98d8;border-radius:7px;border:none;box-sizing:border-box;overflow:hidden"><div style="position:absolute;left:9px;top:6px;width:22px;height:29px;background:#fff"></div><svg style="position:absolute;left:12px;top:10px" width="16" height="12"><path d="M0,1 H16 M0,4 H16 M0,7 H16 M0,10 H10" stroke="#8080c0" stroke-width="1"/></svg></div><div style="position:absolute;left:484px;top:2351px;width:41px;height:41px;background:#3a3a3a;border-radius:7px;border:none;box-sizing:border-box;overflow:hidden"><div style="position:absolute;left:20px;top:20px;width:21px;height:21px;background:#f27a22"></div><div style="position:absolute;left:4px;top:1px;color:#fff;font:bold 17px 'Liberation Sans'">+ &#8211;</div><div style="position:absolute;left:4px;top:21px;color:#fff;font:bold 17px 'Liberation Sans'">&#215; =</div></div><div style="position:absolute;left:538px;top:2351px;width:41px;height:41px;background:linear-gradient(#4a78c0,#2e559a);border-radius:7px;border:none;box-sizing:border-box;overflow:hidden"><div style="position:absolute;left:6px;top:12px;width:29px;height:20px;background:#fff;border-radius:2px"></div><div style="position:absolute;left:15px;top:15px;width:12px;height:12px;border:2.5px solid #2e559a;border-radius:50%;box-sizing:border-box"></div><div style="position:absolute;left:16px;top:7px;width:10px;height:3px;background:#fff"></div></div><div style="position:absolute;left:592px;top:2351px;width:40px;height:41px;background:linear-gradient(#c2a850,#8a7430);border-radius:7px;border:none;box-sizing:border-box;overflow:hidden"><svg width="40" height="41"><path d="M6,32 H22 M22,29 H28 V35 H22 Z M28,32 Q36,28 30,20 Q24,12 32,8" fill="none" stroke="#fff" stroke-width="3"/></svg></div><div style="position:absolute;left:646px;top:2351px;width:40px;height:41px;background:conic-gradient(from 200deg,#ff2050,#ffd000,#50e000,#00c0ff,#8020ff,#ff2050);border-radius:7px;border:none;box-sizing:border-box;overflow:hidden"><svg width="40" height="41"><path d="M8,14 L20,3 L32,14" fill="none" stroke="#d8d8d8" stroke-width="4"/></svg></div><div style="position:absolute;left:700px;top:2351px;width:40px;height:41px;background:linear-gradient(#f04050,#d02030);border-radius:7px;border:none;box-sizing:border-box;overflow:hidden"><svg width="40" height="41"><path d="M8,14 L20,3 L32,14" fill="none" stroke="#d8d8d8" stroke-width="4"/><path d="M12,17 L30,26 L12,35 Z" fill="#fff"/></svg></div><div style="position:absolute;left:754px;top:2351px;width:40px;height:41px;background:linear-gradient(#3a8a3a,#2a6a2a);border-radius:7px;border:none;box-sizing:border-box;overflow:hidden"><svg width="40" height="41"><path d="M8,14 L20,3 L32,14" fill="none" stroke="#d8d8d8" stroke-width="4"/><rect x="11" y="14" width="18" height="22" fill="#fff"/><path d="M14,27 H26 M14,30 H26 M14,33 H24" stroke="#3a8a3a"/></svg></div><div style="position:absolute;left:808px;top:2351px;width:40px;height:41px;background:linear-gradient(#1a1aa0,#10105a);border-radius:7px;border:none;box-sizing:border-box;overflow:hidden"><svg width="40" height="41"><path d="M8,26 V20 A12,12 0 0 1 32,20 V26" fill="none" stroke="#fff" stroke-width="3"/><rect x="5" y="23" width="6" height="10" rx="2" fill="#fff"/><rect x="29" y="23" width="6" height="10" rx="2" fill="#fff"/><path d="M13,28 L15,20 L17,32 L19,15 L21,33 L23,19 L25,30 L27,24" fill="#f0a000" stroke="#e03000" stroke-width="1.5"/></svg></div><div style="position:absolute;left:862px;top:2351px;width:40px;height:41px;background:#2a2a2a;border-radius:7px;border:none;box-sizing:border-box;overflow:hidden"><svg width="40" height="41"><path d="M3,10 L8,2 M11,10 L16,2 M19,10 L24,2 M27,10 L32,2 M35,10 L39,3" stroke="#eee" stroke-width="4"/></svg></div><div style="position:absolute;left:916px;top:2351px;width:40px;height:41px;background:linear-gradient(#40b8f0,#2080e0);border-radius:7px;border:none;box-sizing:border-box;overflow:hidden"><svg width="40" height="41"><path d="M8,14 L20,3 L32,14" fill="none" stroke="#d8d8d8" stroke-width="4"/><path d="M8,32 A7,7 0 0 1 10,19 A10,10 0 0 1 29,18 A7,7 0 0 1 32,32 Z" fill="#eee"/></svg></div><div style="position:absolute;left:970px;top:2351px;width:40px;height:41px;background:linear-gradient(#e0e0e0,#b8b8b8);border-radius:7px;border:none;box-sizing:border-box;overflow:hidden"><div style="position:absolute;left:4px;top:6px;font:bold italic 22px 'Liberation Sans';color:#404040;letter-spacing:-3px">XXX</div></div><div style="position:absolute;left:1068px;top:2358px;width:29px;height:29px;background:#4a5a8a;border-radius:4px;border:none;box-sizing:border-box;overflow:hidden"><div style="position:absolute;left:5px;top:7px;width:19px;height:14px;background:#b8b8b0"></div></div><div style="position:absolute;left:1117.5px;top:2353.1px;font-size:40px;line-height:40px;font-weight:400;font-style:normal;color:#d8d8d8;white-space:pre;transform:scaleX(0.7812);transform-origin:0 0;">[C…</div><div style="position:absolute;left:1217.5px;top:2358px;width:29px;height:29px;background:#c8643c;border-radius:4px;border:none;box-sizing:border-box;overflow:hidden"><svg width="29" height="29"><circle cx="14.5" cy="15" r="8" fill="none" stroke="#c8c8c8" stroke-width="4"/></svg></div><div style="position:absolute;left:1267.0px;top:2353.1px;font-size:40px;line-height:40px;font-weight:400;font-style:normal;color:#d8d8d8;white-space:pre;transform:scaleX(0.8634);transform-origin:0 0;">[O…</div><div style="position:absolute;left:1367px;top:2358px;width:29px;height:29px;background:#c8643c;border-radius:4px;border:none;box-sizing:border-box;overflow:hidden"><svg width="29" height="29"><circle cx="14.5" cy="15" r="8" fill="none" stroke="#c8c8c8" stroke-width="4"/></svg></div><div style="position:absolute;left:1417.0px;top:2353.1px;font-size:40px;line-height:40px;font-weight:400;font-style:normal;color:#d8d8d8;white-space:pre;transform:scaleX(0.9000);transform-origin:0 0;">[N…</div><div style="position:absolute;left:1517px;top:2358px;width:29px;height:29px;background:#c8643c;border-radius:4px;border:none;box-sizing:border-box;overflow:hidden"><svg width="29" height="29"><circle cx="14.5" cy="15" r="8" fill="none" stroke="#c8c8c8" stroke-width="4"/></svg></div><div style="position:absolute;left:1566.0px;top:2353.1px;font-size:40px;line-height:40px;font-weight:400;font-style:normal;color:#d8d8d8;white-space:pre;transform:scaleX(0.8869);transform-origin:0 0;">[A…</div><div style="position:absolute;left:1666px;top:2358px;width:29px;height:29px;background:#c8643c;border-radius:4px;border:none;box-sizing:border-box;overflow:hidden"><svg width="29" height="29"><circle cx="14.5" cy="15" r="8" fill="none" stroke="#c8c8c8" stroke-width="4"/></svg></div><div style="position:absolute;left:1718.0px;top:2353.1px;font-size:40px;line-height:40px;font-weight:400;font-style:normal;color:#d8d8d8;white-space:pre;transform:scaleX(0.9113);transform-origin:0 0;">[Aj…</div><div style="position:absolute;left:1818px;top:2358px;width:29px;height:29px;background:#c8643c;border-radius:4px;border:none;box-sizing:border-box;overflow:hidden"><svg width="29" height="29"><circle cx="14.5" cy="15" r="8" fill="none" stroke="#c8c8c8" stroke-width="4"/></svg></div><div style="position:absolute;left:1868.0px;top:2353.1px;font-size:40px;line-height:40px;font-weight:400;font-style:normal;color:#d8d8d8;white-space:pre;transform:scaleX(0.8375);transform-origin:0 0;">[C…</div><div style="position:absolute;left:1968px;top:2358px;width:29px;height:29px;background:#c8643c;border-radius:4px;border:none;box-sizing:border-box;overflow:hidden"><svg width="29" height="29"><circle cx="14.5" cy="15" r="8" fill="none" stroke="#c8c8c8" stroke-width="4"/></svg></div><div style="position:absolute;left:2018.0px;top:2353.1px;font-size:40px;line-height:40px;font-weight:400;font-style:normal;color:#d8d8d8;white-space:pre;transform:scaleX(0.9119);transform-origin:0 0;">[M…</div><div style="position:absolute;left:2119px;top:2358px;width:30px;height:29px;background:linear-gradient(#6080d0,#3050a0);border-radius:4px;border:none;box-sizing:border-box;overflow:hidden"><div style="position:absolute;left:5px;top:7px;width:20px;height:15px;background:#e8e8e8"></div></div><div style="position:absolute;left:2165.0px;top:2353.1px;font-size:40px;line-height:40px;font-weight:700;font-style:normal;color:#e4e4e4;white-space:pre;transform:scaleX(0.9332);transform-origin:0 0;">9 r…</div><div style="position:absolute;left:2270px;top:2360px;width:32px;height:27px;background:#5cc5ad;"></div><div style="position:absolute;left:2270px;top:2360px;width:32px;height:5px;background:#47998a;"></div><div style="position:absolute;left:2320.0px;top:2353.1px;font-size:40px;line-height:40px;font-weight:400;font-style:normal;color:#d8d8d8;white-space:pre;transform:scaleX(0.8770);transform-origin:0 0;">Bu…</div><svg style="position:absolute;left:2420px;top:2360px" width="30" height="24"><rect width="30" height="24" fill="#101018"/><rect x="8" y="2" width="5" height="20" fill="#303040"/><rect x="18" y="2" width="5" height="20" fill="#303040"/></svg><div style="position:absolute;left:2470.0px;top:2353.1px;font-size:40px;line-height:40px;font-weight:400;font-style:normal;color:#d8d8d8;white-space:pre;transform:scaleX(0.8558);transform-origin:0 0;">Ca…</div><svg style="position:absolute;left:2568px;top:2360px" width="32" height="28"><path d="M2,9 H14 M4,15 H18 M2,21 H14" stroke="#5a8ad8" stroke-width="2.5"/><path d="M16,4 L28,14 L16,24 Z" fill="#4a90e0"/><path d="M16,4 V24" stroke="#e04040" stroke-width="2"/></svg><div style="position:absolute;left:2618.0px;top:2353.1px;font-size:40px;line-height:40px;font-weight:400;font-style:normal;color:#d8d8d8;white-space:pre;transform:scaleX(0.8320);transform-origin:0 0;">Sa…</div><div style="position:absolute;left:2712px;top:2346px;width:152px;height:54px;background:#5aaa98;"></div><div style="position:absolute;left:2720px;top:2356px;width:32px;height:33px;background:#1e2a24;border-radius:5px;border:1px solid #101010;box-sizing:border-box;overflow:hidden"><svg width="32" height="33"><path d="M3,18 H11 L13,12 L16,24 L18,16 H29" fill="none" stroke="#30c040" stroke-width="1.8"/></svg></div><div style="position:absolute;left:2769.0px;top:2353.1px;font-size:40px;line-height:40px;font-weight:400;font-style:normal;color:#f4f4f4;white-space:pre;transform:scaleX(0.9137);transform-origin:0 0;">M…</div><div style="position:absolute;left:2902.0px;top:2355.2px;font-size:34px;line-height:34px;font-weight:400;font-style:normal;color:#c8c8c8;white-space:pre;transform:scaleX(1.5398);transform-origin:0 0;">fr</div><svg style="position:absolute;left:2941px;top:2349px" width="50" height="48"><rect x="2" y="4" width="42" height="30" rx="3" fill="#e8e8e8"/><rect x="6" y="8" width="34" height="22" fill="#606060"/><rect x="16" y="35" width="14" height="6" fill="#d8d8d8"/><rect x="10" y="41" width="26" height="4" fill="#e8e8e8"/><path d="M2,2 L44,34 H2 Z" fill="#e8c850" stroke="#a08020" stroke-width="1.5"/><path d="M9,14 L30,30 H9 Z" fill="#606060" opacity=".5"/></svg><svg style="position:absolute;left:2998px;top:2356px" width="48" height="36"><path d="M2,16 L36,2 L46,12 V34 H2 Z" fill="#e8d040"/><path d="M12,18 Q30,6 44,8 L46,20 Q30,20 14,24 Z" fill="#fff080"/><rect x="2" y="22" width="44" height="12" fill="#d8c030"/></svg><svg style="position:absolute;left:3047px;top:2347px" width="80" height="53"><rect x="0.5" y="0.5" width="79" height="52" fill="#000" stroke="#909090"/><path d="M1,15 L6,12 L9,18 L14,14 L18,20 L22,10 L26,16 L30,14 L34,19 L38,13 L42,17 L46,14 L50,20 L54,15 L58,17 L62,12 L66,18 L70,15 L74,9 L79,13 V30 H1 Z" fill="#1ea0f0"/><rect x="1" y="28" width="78" height="24" fill="#0a6ab0"/><path d="M60,22 L60,36 L64,32 L67,38 L69,37 L66,31 L71,31 Z" fill="#000" stroke="#fff" stroke-width="1"/></svg><div style="position:absolute;left:3143px;top:2351px;width:30px;height:44px;background:#6e6e6a;border-radius:15px"></div><svg style="position:absolute;left:3143px;top:2351px" width="30" height="44"><path d="M9,14 L21,26 L15,32 V12 L21,18 L9,30" fill="none" stroke="#a0a0a0" stroke-width="2"/></svg><svg style="position:absolute;left:3192px;top:2350px" width="36" height="46"><rect x="3" y="8" width="30" height="36" rx="3" fill="none" stroke="#d8d8d8" stroke-width="4"/><rect x="11" y="2" width="14" height="6" fill="#d8d8d8"/><rect x="8" y="16" width="20" height="24" fill="#d8d8d8"/></svg><svg style="position:absolute;left:3244px;top:2350px" width="38" height="46"><rect x="3" y="8" width="32" height="36" rx="4" fill="none" stroke="#d8d8d8" stroke-width="4"/><circle cx="19" cy="6" r="4" fill="none" stroke="#d8d8d8" stroke-width="3"/><rect x="17" y="16" width="5" height="12" fill="#d8d8d8"/><rect x="17" y="32" width="5" height="5" fill="#d8d8d8"/></svg><svg style="position:absolute;left:3292px;top:2350px" width="48" height="48"><path d="M22,2 L43,10 Q43,34 22,44 Q2,34 2,10 Z" fill="#d8d8d8"/><path d="M22,9 L36,14 Q35,31 22,38 Z" fill="#888888"/><path d="M22,9 L8,14 Q9,31 22,38 Z" fill="#545550"/><circle cx="36" cy="38" r="8" fill="#f27a22"/></svg><svg style="position:absolute;left:3345px;top:2354px" width="40" height="36"><path d="M2,10 Q20,-4 38,10 L20,34 Z" fill="#888"/><path d="M8,16 Q20,6 32,16 L20,34 Z" fill="#d8d8d8"/><path d="M12,20 Q20,14 28,20" fill="none" stroke="#545550" stroke-width="2"/><path d="M15,25 Q20,21 25,25" fill="none" stroke="#545550" stroke-width="2"/></svg><svg style="position:absolute;left:3397px;top:2357px" width="46" height="32"><path d="M16,2 H44 V30 H16" fill="#d8d8d8"/><path d="M1,16 Q16,2 32,16 Q16,30 1,16 Z" fill="none" stroke="#d8d8d8" stroke-width="3"/><circle cx="17" cy="16" r="5" fill="none" stroke="#545550" stroke-width="2.5"/></svg><svg style="position:absolute;left:3447px;top:2352px" width="46" height="42"><path d="M2,14 H10 L22,3 V39 L10,28 H2 Z" fill="#d8d8d8"/><path d="M27,14 Q31,21 27,28 M32,9 Q39,21 32,33 M37,4 Q47,21 37,38" fill="none" stroke="#d8d8d8" stroke-width="3.5"/></svg><div style="position:absolute;left:3510.0px;top:2354.0px;font-size:39px;line-height:39px;font-weight:400;font-style:normal;color:#d8d8d8;white-space:pre;transform:scaleX(0.9465);transform-origin:0 0;">mer. 22 févr., 21:41</div></body></html>
